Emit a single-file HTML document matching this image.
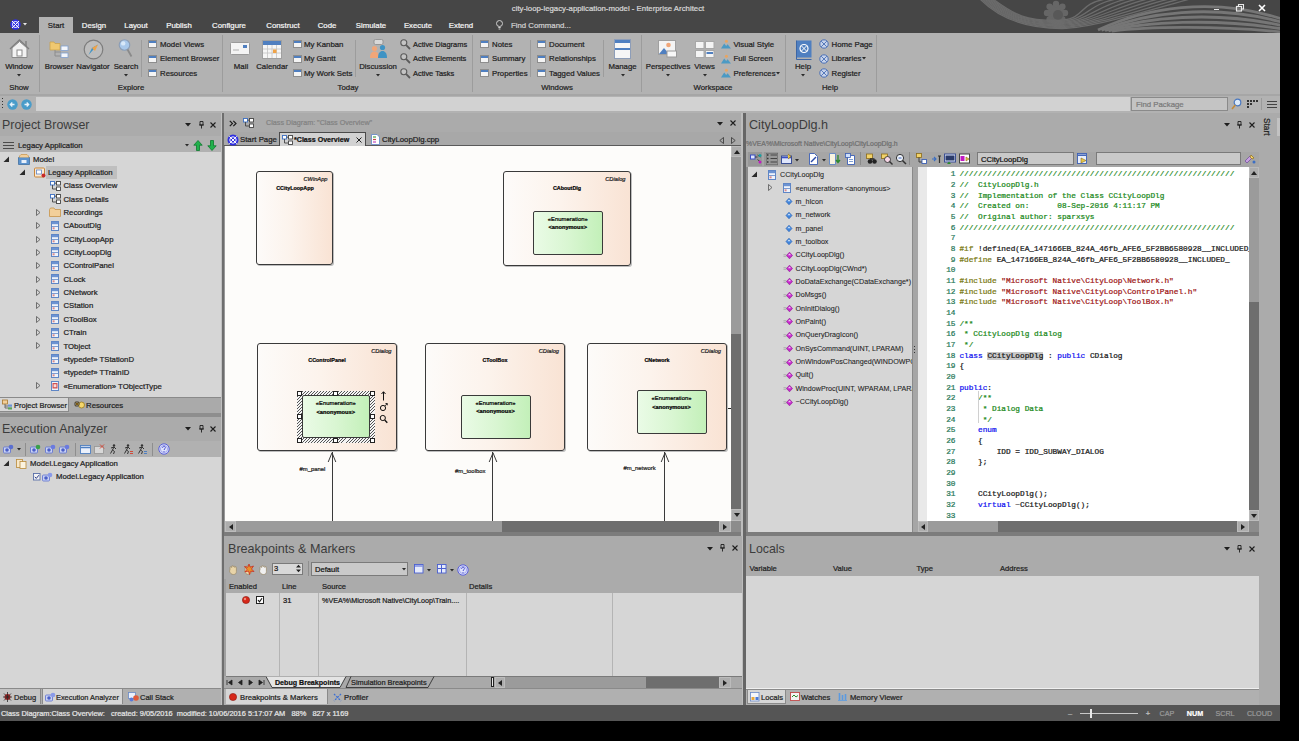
<!DOCTYPE html>
<html><head><meta charset="utf-8">
<style>
*{box-sizing:border-box;margin:0;padding:0}
html,body{width:1310px;height:750px;overflow:hidden;background:#fff;font-family:"Liberation Sans",sans-serif;font-size:7.8px;color:#1e1e1e}
.a{position:absolute}
.t{white-space:nowrap;line-height:12px;height:12px;-webkit-text-stroke:.22px currentColor}
#black{left:0;top:0;width:1299px;height:741px;background:#000}
#app{left:0;top:0;width:1280px;height:721px;background:#ababab;overflow:hidden}
</style></head><body>
<div id="black" class="a"></div>
<div id="app" class="a">
<div class="a" style="left:0px;top:0px;width:1280px;height:33px;background:#464646;"></div>
<svg class="a" style="left:0px;top:0px" width="1280" height="33" viewBox="0 0 1280 33"><g fill="#666"><circle cx="1056" cy="13" r="8.500"/><circle cx="1065.0" cy="13.0" r="3.200"/><circle cx="1062.4" cy="19.4" r="3.200"/><circle cx="1056.0" cy="22.0" r="3.200"/><circle cx="1049.6" cy="19.4" r="3.200"/><circle cx="1047.0" cy="13.0" r="3.200"/><circle cx="1049.6" cy="6.6" r="3.200"/><circle cx="1056.0" cy="4.0" r="3.200"/><circle cx="1062.4" cy="6.6" r="3.200"/></g><circle cx="1058" cy="15" r="5" fill="#585858"/><path d="M993.0 -1 C1015.0 15.4 1026.0 20.5 1056.0 20.5 S1076.0 4.0 1106.0 -1" fill="none" stroke="#6c6c6c" stroke-width="1.3"/><path d="M991.4 -1 C1013.4 16.1 1026.8 21.5 1056.8 21.5 S1086.5 4.4 1116.5 -1" fill="none" stroke="#6c6c6c" stroke-width="1.3"/><path d="M989.8 -1 C1011.8 16.9 1027.5 22.5 1057.5 22.5 S1097.0 4.8 1127.0 -1" fill="none" stroke="#6c6c6c" stroke-width="1.3"/><path d="M988.1 -1 C1010.1 17.6 1028.2 23.5 1058.2 23.5 S1107.5 5.1 1137.5 -1" fill="none" stroke="#6c6c6c" stroke-width="1.3"/><path d="M986.5 -1 C1008.5 18.4 1029.0 24.5 1059.0 24.5 S1118.0 5.5 1148.0 -1" fill="none" stroke="#6c6c6c" stroke-width="1.3"/><path d="M984.9 -1 C1006.9 19.1 1029.8 25.5 1059.8 25.5 S1128.5 5.9 1158.5 -1" fill="none" stroke="#6c6c6c" stroke-width="1.3"/><path d="M983.2 -1 C1005.2 19.9 1030.5 26.5 1060.5 26.5 S1139.0 6.2 1169.0 -1" fill="none" stroke="#6c6c6c" stroke-width="1.3"/><path d="M981.6 -1 C1003.6 20.6 1031.2 27.5 1061.2 27.5 S1149.5 6.6 1179.5 -1" fill="none" stroke="#6c6c6c" stroke-width="1.3"/><path d="M980.0 -1 C1002.0 21.4 1032.0 28.5 1062.0 28.5 S1160.0 7.0 1190.0 -1" fill="none" stroke="#6c6c6c" stroke-width="1.3"/><path d="M1112.0 31.0 C1145 27.0 1212 25.0 1282 32.0" fill="none" stroke="#767676" stroke-width="2.800"/><path d="M1108.5 30.8 C1145 22.2 1212 17.8 1282 28.8" fill="none" stroke="#767676" stroke-width="2.800"/><path d="M1105.0 30.5 C1145 17.5 1212 10.5 1282 25.5" fill="none" stroke="#767676" stroke-width="2.800"/><path d="M1101.5 30.2 C1145 12.8 1212 3.2 1282 22.2" fill="none" stroke="#767676" stroke-width="2.800"/><path d="M1098.0 30.0 C1145 8.0 1212 -4.0 1282 19.0" fill="none" stroke="#767676" stroke-width="2.800"/></svg>
<div class="a t" style="left:608px;top:2.60px;font-size:7.8px;color:#d6d6d6;transform:translateX(-50%);">city-loop-legacy-application-model - Enterprise Architect</div>
<div class="a" style="left:1214px;top:9px;width:5px;height:1px;background:#e8e8e8;"></div>
<svg class="a" style="left:1235px;top:3px" width="10" height="10" viewBox="0 0 10 10"><rect x="1.5" y="3.500" width="5" height="4.500" fill="none" stroke="#e8e8e8" stroke-width="1.2"/><path d="M3.500 3V1.500h5v4.500H7" fill="none" stroke="#e8e8e8" stroke-width="1.100"/></svg>
<svg class="a" style="left:1257px;top:3px" width="10" height="10" viewBox="0 0 10 10"><path d="M2 2l6 6M8 2l-6 6" stroke="#fff" stroke-width="1.6"/></svg>
<svg class="a" style="left:9.5px;top:18.5px" width="11" height="11" viewBox="0 0 11 11"><circle cx="5.500" cy="5.500" r="5.200" fill="#2f2fe0"/><circle cx="5.500" cy="5.500" r="3" fill="none" stroke="#fff" stroke-width="1"/><path d="M2 2l7 7M9 2l-7 7" stroke="#fff" stroke-width="1"/></svg>
<svg class="a" style="left:23px;top:23px" width="5" height="3" viewBox="0 0 5 3"><path d="M0 0h4l-2 2.500z" fill="#e8e8e8"/></svg>
<div class="a" style="left:39px;top:17px;width:34px;height:17px;background:#b2b2b2;"></div>
<div class="a t" style="left:56px;top:19.60px;font-size:7.8px;color:#1e1e1e;transform:translateX(-50%);">Start</div>
<div class="a t" style="left:94px;top:19.60px;font-size:7.8px;color:#f4f4f4;transform:translateX(-50%);">Design</div>
<div class="a t" style="left:136px;top:19.60px;font-size:7.8px;color:#f4f4f4;transform:translateX(-50%);">Layout</div>
<div class="a t" style="left:179px;top:19.60px;font-size:7.8px;color:#f4f4f4;transform:translateX(-50%);">Publish</div>
<div class="a t" style="left:229px;top:19.60px;font-size:7.8px;color:#f4f4f4;transform:translateX(-50%);">Configure</div>
<div class="a t" style="left:283px;top:19.60px;font-size:7.8px;color:#f4f4f4;transform:translateX(-50%);">Construct</div>
<div class="a t" style="left:327px;top:19.60px;font-size:7.8px;color:#f4f4f4;transform:translateX(-50%);">Code</div>
<div class="a t" style="left:371px;top:19.60px;font-size:7.8px;color:#f4f4f4;transform:translateX(-50%);">Simulate</div>
<div class="a t" style="left:418px;top:19.60px;font-size:7.8px;color:#f4f4f4;transform:translateX(-50%);">Execute</div>
<div class="a t" style="left:461px;top:19.60px;font-size:7.8px;color:#f4f4f4;transform:translateX(-50%);">Extend</div>
<svg class="a" style="left:495px;top:19px" width="9" height="12" viewBox="0 0 9 12"><circle cx="4.5" cy="4.5" r="3" fill="none" stroke="#cfcfcf" stroke-width="1"/><path d="M3.3 8.5h2.4M3.6 10h1.8" stroke="#cfcfcf" stroke-width="1"/></svg>
<div class="a t" style="left:511px;top:19.60px;font-size:7.8px;color:#d0d0d0;">Find Command...</div>
<div class="a" style="left:0px;top:33px;width:1280px;height:61px;background:#b2b2b2;"></div>
<div class="a" style="left:0px;top:94px;width:1280px;height:2px;background:#a6a6a6;"></div>
<div class="a" style="left:39px;top:35px;width:1px;height:57px;background:#9c9c9c;"></div>
<div class="a" style="left:222px;top:35px;width:1px;height:57px;background:#9c9c9c;"></div>
<div class="a" style="left:472px;top:35px;width:1px;height:57px;background:#9c9c9c;"></div>
<div class="a" style="left:641px;top:35px;width:1px;height:57px;background:#9c9c9c;"></div>
<div class="a" style="left:785px;top:35px;width:1px;height:57px;background:#9c9c9c;"></div>
<div class="a" style="left:876px;top:35px;width:1px;height:57px;background:#9c9c9c;"></div>
<div class="a" style="left:141px;top:40px;width:1px;height:37px;background:#9c9c9c;"></div>
<div class="a" style="left:355px;top:40px;width:1px;height:37px;background:#9c9c9c;"></div>
<div class="a" style="left:530px;top:40px;width:1px;height:37px;background:#9c9c9c;"></div>
<div class="a" style="left:603px;top:40px;width:1px;height:37px;background:#9c9c9c;"></div>
<svg class="a" style="left:8px;top:38px" width="23" height="21" viewBox="0 0 23 21"><path d="M2 11L11.5 2 21 11" fill="none" stroke="#7e7e7e" stroke-width="1.4"/><path d="M4 10v9.5h15V10L11.5 3.5z" fill="#f2f2f2" stroke="#8a8a8a" stroke-width="1"/><rect x="9" y="12" width="5" height="6" fill="#fff" stroke="#8a8a8a"/><path d="M18 3v5" stroke="#7e7e7e" stroke-width="1.4"/></svg>
<div class="a t" style="left:19px;top:61.00px;font-size:7.8px;color:#1e1e1e;transform:translateX(-50%);">Window</div>
<svg class="a" style="left:17px;top:73.8px" width="4" height="3" viewBox="0 0 4 3"><path d="M0 0h4l-2 2.400z" fill="#2a2a2a"/></svg>
<div class="a t" style="left:19px;top:81.60px;font-size:7.8px;color:#222;transform:translateX(-50%);">Show</div>
<svg class="a" style="left:49px;top:39px" width="21" height="20" viewBox="0 0 21 20"><path d="M1 3h4l1 1.5h5V11H1z" fill="#f0c870" stroke="#c9a24f" stroke-width=".8"/><path d="M6 11v6h6M6 13h6" fill="none" stroke="#8c8c8c" stroke-width="1"/><rect x="12" y="7" width="7" height="4.5" fill="#f3f6fb" stroke="#7fa0d0" stroke-width=".8"/><rect x="12" y="14" width="7" height="4.5" fill="#f3f6fb" stroke="#7fa0d0" stroke-width=".8"/></svg>
<div class="a t" style="left:59px;top:61.00px;font-size:7.8px;color:#1e1e1e;transform:translateX(-50%);">Browser</div>
<svg class="a" style="left:83px;top:39px" width="21" height="21" viewBox="0 0 21 21"><circle cx="10.5" cy="10.5" r="9.3" fill="#bdbdbd" stroke="#7d7d7d" stroke-width="1.2"/><path d="M15 5.5L9 9l-3.5 7z" fill="#3f93c4"/><path d="M15 5.5L12 12l-3-3z" fill="#f0a347"/></svg>
<div class="a t" style="left:93px;top:61.00px;font-size:7.8px;color:#1e1e1e;transform:translateX(-50%);">Navigator</div>
<svg class="a" style="left:118px;top:38px" width="17" height="21" viewBox="0 0 17 21"><circle cx="6.500" cy="7" r="5.300" fill="#a9c8ea" stroke="#8b9db5" stroke-width="1.100"/><circle cx="5.200" cy="5.400" r="2.200" fill="#d8e8f8"/><path d="M9.500 11.500l4 7" stroke="#8a8a8a" stroke-width="1.800"/></svg>
<div class="a t" style="left:126px;top:61.00px;font-size:7.8px;color:#1e1e1e;transform:translateX(-50%);">Search</div>
<svg class="a" style="left:124px;top:73.8px" width="4" height="3" viewBox="0 0 4 3"><path d="M0 0h4l-2 2.400z" fill="#2a2a2a"/></svg>
<svg class="a" style="left:148px;top:40px" width="9" height="8" viewBox="0 0 9 8"><rect x=".5" y=".5" width="8" height="7" fill="#f4f4f4" stroke="#8d8d8d"/><rect x="1" y="1" width="7" height="2" fill="#4f7fc0"/></svg>
<div class="a t" style="left:160px;top:38.60px;font-size:7.8px;color:#1e1e1e;">Model Views</div>
<svg class="a" style="left:148px;top:54.5px" width="9" height="8" viewBox="0 0 9 8"><rect x=".5" y=".5" width="8" height="7" fill="#f4f4f4" stroke="#8d8d8d"/><rect x="1" y="1" width="7" height="2" fill="#4f7fc0"/></svg>
<div class="a t" style="left:160px;top:53.10px;font-size:7.8px;color:#1e1e1e;">Element Browser</div>
<svg class="a" style="left:148px;top:69px" width="9" height="8" viewBox="0 0 9 8"><rect x=".5" y=".5" width="8" height="7" fill="#f4f4f4" stroke="#8d8d8d"/><rect x="1" y="1" width="7" height="2" fill="#4f7fc0"/></svg>
<div class="a t" style="left:160px;top:67.60px;font-size:7.8px;color:#1e1e1e;">Resources</div>
<div class="a t" style="left:131px;top:81.60px;font-size:7.8px;color:#222;transform:translateX(-50%);">Explore</div>
<svg class="a" style="left:230px;top:42px" width="20" height="14" viewBox="0 0 20 14"><rect x=".5" y=".5" width="19" height="12" rx="1" fill="#f4f4f4" stroke="#9a9a9a"/><rect x="13" y="3" width="4" height="3" fill="#4f7fc0"/><path d="M3 8h6" stroke="#b0b0b0"/></svg>
<div class="a t" style="left:241px;top:61.00px;font-size:7.8px;color:#1e1e1e;transform:translateX(-50%);">Mail</div>
<svg class="a" style="left:262px;top:40px" width="20" height="19" viewBox="0 0 20 19"><rect x=".5" y=".5" width="19" height="18" fill="#f6f6f6" stroke="#a0a0a0"/><rect x="1" y="1" width="18" height="4" fill="#4f7fc0"/><path d="M1 9h18M1 13h18M5.5 5v13M10 5v13M14.500 5v13" stroke="#c4c4c4" stroke-width=".8"/><rect x="11" y="9.500" width="3.5" height="3.500" fill="#f0a347"/></svg>
<div class="a t" style="left:272px;top:61.00px;font-size:7.8px;color:#1e1e1e;transform:translateX(-50%);">Calendar</div>
<svg class="a" style="left:293px;top:40px" width="9" height="8" viewBox="0 0 9 8"><rect x=".5" y=".5" width="8" height="7" fill="#f4f4f4" stroke="#8d8d8d"/><rect x="1" y="1" width="7" height="2" fill="#4f7fc0"/></svg>
<div class="a t" style="left:304px;top:38.60px;font-size:7.8px;color:#1e1e1e;">My Kanban</div>
<svg class="a" style="left:293px;top:54.5px" width="9" height="8" viewBox="0 0 9 8"><rect x=".5" y=".5" width="8" height="7" fill="#f4f4f4" stroke="#8d8d8d"/><rect x="1" y="1" width="7" height="2" fill="#4f7fc0"/></svg>
<div class="a t" style="left:304px;top:53.10px;font-size:7.8px;color:#1e1e1e;">My Gantt</div>
<svg class="a" style="left:293px;top:69px" width="9" height="8" viewBox="0 0 9 8"><rect x=".5" y=".5" width="8" height="7" fill="#f4f4f4" stroke="#8d8d8d"/><rect x="1" y="1" width="7" height="2" fill="#4f7fc0"/></svg>
<div class="a t" style="left:304px;top:67.60px;font-size:7.8px;color:#1e1e1e;">My Work Sets</div>
<svg class="a" style="left:369px;top:39px" width="19" height="20" viewBox="0 0 19 20"><rect x="5" y=".5" width="9" height="5" rx="1.5" fill="#d8d8d8" stroke="#8a8a8a" stroke-width=".8"/><circle cx="5.500" cy="9.500" r="2.600" fill="#f0a679"/><path d="M1 19c0-5 2-6.500 4.500-6.500S10 14 10 19z" fill="#f0a679"/><circle cx="13.5" cy="8.500" r="2.600" fill="#3f93c4"/><path d="M9 19c0-5 2-7 4.500-7S18 14 18 19z" fill="#3f93c4"/></svg>
<div class="a t" style="left:378px;top:61.00px;font-size:7.8px;color:#1e1e1e;transform:translateX(-50%);">Discussion</div>
<svg class="a" style="left:376px;top:73.8px" width="4" height="3" viewBox="0 0 4 3"><path d="M0 0h4l-2 2.400z" fill="#2a2a2a"/></svg>
<svg class="a" style="left:400px;top:38.5px" width="11" height="11" viewBox="0 0 11 11"><circle cx="3.800" cy="3.800" r="3" fill="#c4c4c4" stroke="#5a5a5a" stroke-width="1.100"/><path d="M6.200 6.200l3.800 3.800" stroke="#5a5a5a" stroke-width="1.800"/></svg>
<div class="a t" style="left:413px;top:38.60px;font-size:7.45px;color:#1e1e1e;">Active Diagrams</div>
<svg class="a" style="left:400px;top:53.0px" width="11" height="11" viewBox="0 0 11 11"><circle cx="3.800" cy="3.800" r="3" fill="#c4c4c4" stroke="#5a5a5a" stroke-width="1.100"/><path d="M6.200 6.200l3.800 3.800" stroke="#5a5a5a" stroke-width="1.800"/></svg>
<div class="a t" style="left:413px;top:53.10px;font-size:7.45px;color:#1e1e1e;">Active Elements</div>
<svg class="a" style="left:400px;top:67.5px" width="11" height="11" viewBox="0 0 11 11"><circle cx="3.800" cy="3.800" r="3" fill="#c4c4c4" stroke="#5a5a5a" stroke-width="1.100"/><path d="M6.200 6.200l3.800 3.800" stroke="#5a5a5a" stroke-width="1.800"/></svg>
<div class="a t" style="left:413px;top:67.60px;font-size:7.45px;color:#1e1e1e;">Active Tasks</div>
<div class="a t" style="left:348px;top:81.60px;font-size:7.8px;color:#222;transform:translateX(-50%);">Today</div>
<svg class="a" style="left:480px;top:40px" width="9" height="8" viewBox="0 0 9 8"><rect x=".5" y=".5" width="8" height="7" fill="#f4f4f4" stroke="#8d8d8d"/><rect x="1" y="1" width="7" height="2" fill="#4f7fc0"/></svg>
<div class="a t" style="left:492px;top:38.60px;font-size:7.8px;color:#1e1e1e;">Notes</div>
<svg class="a" style="left:480px;top:54.5px" width="9" height="8" viewBox="0 0 9 8"><rect x=".5" y=".5" width="8" height="7" fill="#f4f4f4" stroke="#8d8d8d"/><rect x="1" y="1" width="7" height="2" fill="#4f7fc0"/></svg>
<div class="a t" style="left:492px;top:53.10px;font-size:7.8px;color:#1e1e1e;">Summary</div>
<svg class="a" style="left:480px;top:69px" width="9" height="8" viewBox="0 0 9 8"><rect x=".5" y=".5" width="8" height="7" fill="#f4f4f4" stroke="#8d8d8d"/><rect x="1" y="1" width="7" height="2" fill="#4f7fc0"/></svg>
<div class="a t" style="left:492px;top:67.60px;font-size:7.8px;color:#1e1e1e;">Properties</div>
<svg class="a" style="left:537px;top:40px" width="9" height="8" viewBox="0 0 9 8"><rect x=".5" y=".5" width="8" height="7" fill="#f4f4f4" stroke="#8d8d8d"/><rect x="1" y="1" width="7" height="2" fill="#4f7fc0"/></svg>
<div class="a t" style="left:549px;top:38.60px;font-size:7.8px;color:#1e1e1e;">Document</div>
<svg class="a" style="left:537px;top:54.5px" width="9" height="8" viewBox="0 0 9 8"><rect x=".5" y=".5" width="8" height="7" fill="#f4f4f4" stroke="#8d8d8d"/><rect x="1" y="1" width="7" height="2" fill="#4f7fc0"/></svg>
<div class="a t" style="left:549px;top:53.10px;font-size:7.8px;color:#1e1e1e;">Relationships</div>
<svg class="a" style="left:537px;top:69px" width="9" height="8" viewBox="0 0 9 8"><rect x=".5" y=".5" width="8" height="7" fill="#f4f4f4" stroke="#8d8d8d"/><rect x="1" y="1" width="7" height="2" fill="#4f7fc0"/></svg>
<div class="a t" style="left:549px;top:67.60px;font-size:7.8px;color:#1e1e1e;">Tagged Values</div>
<svg class="a" style="left:614px;top:39px" width="17" height="20" viewBox="0 0 17 20"><rect x=".5" y=".5" width="16" height="19" fill="#f6f6f6" stroke="#8d9db8"/><rect x="1" y="1" width="15" height="3" fill="#4f7fc0"/><rect x="1" y="9" width="15" height="2" fill="#4f7fc0"/></svg>
<div class="a t" style="left:622.5px;top:61.00px;font-size:7.8px;color:#1e1e1e;transform:translateX(-50%);">Manage</div>
<svg class="a" style="left:620.5px;top:73.8px" width="4" height="3" viewBox="0 0 4 3"><path d="M0 0h4l-2 2.400z" fill="#2a2a2a"/></svg>
<div class="a t" style="left:557px;top:81.60px;font-size:7.8px;color:#222;transform:translateX(-50%);">Windows</div>
<svg class="a" style="left:658px;top:40px" width="19" height="19" viewBox="0 0 19 19"><rect x=".5" y=".5" width="17" height="14" fill="#f4f4f4" stroke="#a0a0a0"/><circle cx="10.5" cy="5" r="2.300" fill="#f0a679"/><path d="M1 14l5-6 5 6z" fill="#4f7fc0"/><rect x="9" y="11" width="9.500" height="6" fill="#f8f8f8" stroke="#9a9a9a"/></svg>
<div class="a t" style="left:668px;top:61.00px;font-size:7.8px;color:#1e1e1e;transform:translateX(-50%);">Perspectives</div>
<svg class="a" style="left:666px;top:73.8px" width="4" height="3" viewBox="0 0 4 3"><path d="M0 0h4l-2 2.400z" fill="#2a2a2a"/></svg>
<svg class="a" style="left:695px;top:41px" width="20" height="17" viewBox="0 0 20 17"><rect x=".5" y=".5" width="8.500" height="7" fill="#f4f4f4" stroke="#a8a8a8"/><rect x="10.5" y=".5" width="8.500" height="7" fill="#f4f4f4" stroke="#a8a8a8"/><rect x=".5" y="9.500" width="8.500" height="7" fill="#f4f4f4" stroke="#a8a8a8"/><rect x="10.5" y="9.500" width="8.500" height="7" fill="#f4f4f4" stroke="#a8a8a8"/><rect x="11.5" y="11" width="6.500" height="2" fill="#4f7fc0"/></svg>
<div class="a t" style="left:704.5px;top:61.00px;font-size:7.8px;color:#1e1e1e;transform:translateX(-50%);">Views</div>
<svg class="a" style="left:702.5px;top:73.8px" width="4" height="3" viewBox="0 0 4 3"><path d="M0 0h4l-2 2.400z" fill="#2a2a2a"/></svg>
<svg class="a" style="left:721px;top:39px" width="10" height="10" viewBox="0 0 10 10"><path d="M0 9.5l3.2-5 2 2.6 1.4-1.8 3.4 4.2z" fill="#4b9ac4"/><circle cx="5.4" cy="2.2" r="1.5" fill="#e9a45f"/></svg>
<div class="a t" style="left:733.5px;top:38.60px;font-size:7.8px;color:#1e1e1e;">Visual Style</div>
<svg class="a" style="left:721px;top:53.5px" width="10" height="10" viewBox="0 0 10 10"><path d="M0 9.5l3.2-5 2 2.6 1.4-1.8 3.4 4.2z" fill="#4b9ac4"/><circle cx="5.4" cy="2.2" r="1.5" fill="#e9a45f"/></svg>
<div class="a t" style="left:733.5px;top:53.10px;font-size:7.8px;color:#1e1e1e;">Full Screen</div>
<svg class="a" style="left:721px;top:68px" width="10" height="10" viewBox="0 0 10 10"><path d="M0 9.5l3.2-5 2 2.6 1.4-1.8 3.4 4.2z" fill="#4b9ac4"/><circle cx="5.4" cy="2.2" r="1.5" fill="#e9a45f"/></svg>
<div class="a t" style="left:733.5px;top:67.60px;font-size:7.8px;color:#1e1e1e;">Preferences</div>
<svg class="a" style="left:776px;top:72.3px" width="4" height="3" viewBox="0 0 4 3"><path d="M0 0h4l-2 2.400z" fill="#2a2a2a"/></svg>
<div class="a t" style="left:713px;top:81.60px;font-size:7.8px;color:#222;transform:translateX(-50%);">Workspace</div>
<svg class="a" style="left:795px;top:40px" width="17" height="20" viewBox="0 0 17 20"><rect x="1.5" y=".5" width="15" height="17" fill="#4f7fc0"/><path d="M1.5 .5v19h15" fill="none" stroke="#3d66a5" stroke-width="1"/><circle cx="9" cy="8.500" r="4" fill="none" stroke="#fff" stroke-width="1.200"/><path d="M6.200 5.700l5.600 5.600M11.800 5.700l-5.600 5.600" stroke="#fff" stroke-width="1"/></svg>
<div class="a t" style="left:803px;top:61.00px;font-size:7.8px;color:#1e1e1e;transform:translateX(-50%);">Help</div>
<svg class="a" style="left:801px;top:73.8px" width="4" height="3" viewBox="0 0 4 3"><path d="M0 0h4l-2 2.400z" fill="#2a2a2a"/></svg>
<svg class="a" style="left:819px;top:39px" width="10" height="10" viewBox="0 0 10 10"><circle cx="5" cy="5" r="4.2" fill="#c7d3ea" stroke="#4a6fb5" stroke-width="1"/><path d="M2.2 2.2l5.6 5.6M7.8 2.2l-5.6 5.6" stroke="#4a6fb5" stroke-width=".9"/></svg>
<div class="a t" style="left:831.5px;top:38.60px;font-size:7.8px;color:#1e1e1e;">Home Page</div>
<svg class="a" style="left:819px;top:53.5px" width="10" height="10" viewBox="0 0 10 10"><circle cx="5" cy="5" r="4.2" fill="#c7d3ea" stroke="#4a6fb5" stroke-width="1"/><path d="M2.2 2.2l5.6 5.6M7.8 2.2l-5.6 5.6" stroke="#4a6fb5" stroke-width=".9"/></svg>
<div class="a t" style="left:831.5px;top:53.10px;font-size:7.8px;color:#1e1e1e;">Libraries</div>
<svg class="a" style="left:819px;top:68px" width="10" height="10" viewBox="0 0 10 10"><circle cx="5" cy="5" r="4.2" fill="#c7d3ea" stroke="#4a6fb5" stroke-width="1"/><path d="M2.2 2.2l5.6 5.6M7.8 2.2l-5.6 5.6" stroke="#4a6fb5" stroke-width=".9"/></svg>
<div class="a t" style="left:831.5px;top:67.60px;font-size:7.8px;color:#1e1e1e;">Register</div>
<svg class="a" style="left:862px;top:57.3px" width="4" height="3" viewBox="0 0 4 3"><path d="M0 0h4l-2 2.400z" fill="#2a2a2a"/></svg>
<div class="a t" style="left:830px;top:81.60px;font-size:7.8px;color:#222;transform:translateX(-50%);">Help</div>
<div class="a" style="left:0px;top:96px;width:1280px;height:17px;background:#b2b2b2;"></div>
<div class="a" style="left:36px;top:97px;width:1094px;height:14px;background:#d2d2d2;"></div>
<div class="a" style="left:2px;top:98px;width:1px;height:1px;background:#333;"></div>
<div class="a" style="left:2px;top:101px;width:1px;height:1px;background:#333;"></div>
<div class="a" style="left:2px;top:104px;width:1px;height:1px;background:#333;"></div>
<div class="a" style="left:2px;top:107px;width:1px;height:1px;background:#333;"></div>
<svg class="a" style="left:7px;top:98.5px" width="11" height="11" viewBox="0 0 11 11"><circle cx="5.500" cy="5.500" r="5.200" fill="#4a9cc9"/><path d="M7.500 5.500H3.500M5.300 3.500L3.300 5.500l2 2" fill="none" stroke="#e8f2fa" stroke-width="1.300"/></svg>
<svg class="a" style="left:21px;top:98.5px" width="11" height="11" viewBox="0 0 11 11"><circle cx="5.500" cy="5.500" r="5.200" fill="#4a9cc9"/><path d="M3.500 5.500h4M5.700 3.500l2 2-2 2" fill="none" stroke="#e8f2fa" stroke-width="1.300"/></svg>
<div class="a" style="left:1131px;top:97px;width:97px;height:14px;background:#c4c4c4;border:1px solid #8a8a8a"></div>
<div class="a t" style="left:1136px;top:98.60px;font-size:7.8px;color:#7a7a7a;">Find Package</div>
<svg class="a" style="left:1231px;top:98px" width="11" height="12" viewBox="0 0 11 12"><circle cx="6.500" cy="4.500" r="3.300" fill="#dbe9f8" stroke="#4a78c0" stroke-width="1.200"/><path d="M4.300 7L1 11" stroke="#c28a3a" stroke-width="1.600"/></svg>
<svg class="a" style="left:1246.5px;top:99px" width="12" height="10" viewBox="0 0 12 10"><path d="M0 1h2v2H0zM3 1h2v2H3zM6 1h2v2H6zM9 1h2v2H9zM0 4h2v2H0zM3 4h2v2H3zM0 7h2v2H0z" fill="#333"/></svg>
<div class="a" style="left:1261px;top:98px;width:1px;height:12px;background:#9a9a9a;"></div>
<div class="a" style="left:1266.5px;top:101px;width:10.5px;height:1px;background:#444;"></div>
<div class="a" style="left:1266.5px;top:104px;width:10.5px;height:1px;background:#444;"></div>
<div class="a" style="left:1266.5px;top:107px;width:10.5px;height:1px;background:#444;"></div>
<div class="a" style="left:0px;top:113px;width:221px;height:39px;background:#ababab;"></div>
<div class="a" style="left:221px;top:113px;width:1px;height:592px;background:#c0c0c0;"></div>
<div class="a" style="left:222px;top:113px;width:2px;height:592px;background:#6e6e6e;"></div>
<div class="a t" style="left:2px;top:119.10px;font-size:12.4px;color:#3c3c3c;line-height:16px;height:16px;margin-top:-2px;-webkit-text-stroke:0;">Project Browser</div>
<svg class="a" style="left:185px;top:123.0px" width="6" height="4" viewBox="0 0 6 4"><path d="M0 0h6l-3 3.500z" fill="#1e1e1e"/></svg>
<svg class="a" style="left:198.5px;top:120.5px" width="5" height="8" viewBox="0 0 5 8"><path d="M1 .5h3v3.500H1zM0 4h5M2.500 4v3.500" fill="none" stroke="#1e1e1e" stroke-width=".9"/></svg>
<svg class="a" style="left:210px;top:121.5px" width="6" height="6" viewBox="0 0 6 6"><path d="M.5 .5l5 5M5.500 .5l-5 5" stroke="#1e1e1e" stroke-width="1.100"/></svg>
<div class="a" style="left:0px;top:136px;width:221px;height:16px;background:#b1b1b1;"></div>
<div class="a" style="left:3px;top:142px;width:11px;height:1px;background:#4a4a4a;"></div>
<div class="a" style="left:3px;top:145px;width:11px;height:1px;background:#4a4a4a;"></div>
<div class="a" style="left:3px;top:148px;width:11px;height:1px;background:#4a4a4a;"></div>
<div class="a t" style="left:18px;top:139.60px;font-size:7.75px;color:#1e1e1e;">Legacy Application</div>
<svg class="a" style="left:185px;top:144.3px" width="4" height="3" viewBox="0 0 4 3"><path d="M0 0h4l-2 2.400z" fill="#2a2a2a"/></svg>
<svg class="a" style="left:193px;top:140px" width="10" height="11" viewBox="0 0 10 11"><path d="M5 .5L.8 5.200h2.700V10.500h3V5.200h2.700z" fill="#22b14c" stroke="#0e7a2d" stroke-width=".8"/></svg>
<svg class="a" style="left:207px;top:140px" width="10" height="11" viewBox="0 0 10 11"><path d="M5 10.500L.8 5.800h2.700V.5h3V5.800h2.700z" fill="#22b14c" stroke="#0e7a2d" stroke-width=".8"/></svg>
<div class="a" style="left:0px;top:152px;width:221px;height:245px;background:#d6d6d6;"></div>
<div class="a" style="left:46px;top:166px;width:71px;height:13px;background:#bfbfbf;"></div>
<svg class="a" style="left:3px;top:155.5px" width="7" height="7" viewBox="0 0 7 7"><path d="M6 .5v5.500H.5z" fill="#2a2a2a"/></svg>
<svg class="a" style="left:18px;top:153.5px" width="12" height="11" viewBox="0 0 12 11"><path d="M.5 3.500V10.500h11V3.500z" fill="#5b93cf" stroke="#41709f" stroke-width=".8"/><path d="M1.500 3.500V2l1.500-1.500h6L10.500 2v1.500" fill="#f2cf9a" stroke="#c99a55" stroke-width=".8"/><rect x="3.500" y="6" width="5" height="3" fill="#e8f0fa"/></svg>
<div class="a t" style="left:33px;top:153.60px;font-size:7.75px;color:#1e1e1e;">Model</div>
<svg class="a" style="left:19px;top:168.85px" width="7" height="7" viewBox="0 0 7 7"><path d="M6 .5v5.500H.5z" fill="#2a2a2a"/></svg>
<svg class="a" style="left:34px;top:166.85px" width="12" height="11" viewBox="0 0 12 11"><rect x=".5" y="1" width="10" height="9" rx="1" fill="#fbe9d2" stroke="#c8863a" stroke-width="1"/><rect x="2.500" y="3" width="5" height="4" fill="#fff" stroke="#5f86c6" stroke-width=".8"/><circle cx="9.500" cy="8.500" r="2" fill="#c62828"/></svg>
<div class="a t" style="left:48px;top:166.95px;font-size:7.75px;color:#1e1e1e;">Legacy Application</div>
<svg class="a" style="left:50px;top:180.7px" width="11" height="10" viewBox="0 0 11 10"><rect x=".5" y=".5" width="4" height="3.500" fill="#fff" stroke="#3b6fc4" stroke-width=".9"/><rect x="6.500" y=".5" width="4" height="3.500" fill="#fff" stroke="#444" stroke-width=".9"/><rect x="6.500" y="6" width="4" height="3.500" fill="#fff" stroke="#444" stroke-width=".9"/><path d="M2.500 4v4h4M4.500 2.200h2" fill="none" stroke="#444" stroke-width=".9"/></svg>
<div class="a t" style="left:63.5px;top:180.30px;font-size:7.75px;color:#1e1e1e;">Class Overview</div>
<svg class="a" style="left:50px;top:194.05px" width="11" height="10" viewBox="0 0 11 10"><rect x=".5" y=".5" width="4" height="3.500" fill="#fff" stroke="#3b6fc4" stroke-width=".9"/><rect x="6.500" y=".5" width="4" height="3.500" fill="#fff" stroke="#444" stroke-width=".9"/><rect x="6.500" y="6" width="4" height="3.500" fill="#fff" stroke="#444" stroke-width=".9"/><path d="M2.500 4v4h4M4.500 2.200h2" fill="none" stroke="#444" stroke-width=".9"/></svg>
<div class="a t" style="left:63.5px;top:193.65px;font-size:7.75px;color:#1e1e1e;">Class Details</div>
<svg class="a" style="left:35.5px;top:208.9px" width="5" height="7" viewBox="0 0 5 7"><path d="M.5 .5v6l3.500-3z" fill="none" stroke="#555" stroke-width=".8"/></svg>
<svg class="a" style="left:49px;top:207.4px" width="12" height="10" viewBox="0 0 12 10"><path d="M.5 2.500V9.500h11V2.500H6L5 1H1.500z" fill="#f2cf9a" stroke="#c99a55" stroke-width=".9"/></svg>
<div class="a t" style="left:63.5px;top:207.00px;font-size:7.75px;color:#1e1e1e;">Recordings</div>
<svg class="a" style="left:35.5px;top:222.25px" width="5" height="7" viewBox="0 0 5 7"><path d="M.5 .5v6l3.500-3z" fill="none" stroke="#555" stroke-width=".8"/></svg>
<svg class="a" style="left:51px;top:220.75px" width="8" height="10" viewBox="0 0 8 10"><rect x=".5" y=".5" width="7" height="9" fill="#eef3fb" stroke="#5f86c6"/><rect x="1" y="1" width="6" height="2.200" fill="#6c93d2"/><path d="M1 5.500h6" stroke="#5f86c6" stroke-width=".8"/><rect x="1.600" y="6.300" width="2" height="2" fill="#d98a8a"/></svg>
<div class="a t" style="left:63.5px;top:220.35px;font-size:7.75px;color:#1e1e1e;">CAboutDlg</div>
<svg class="a" style="left:35.5px;top:235.6px" width="5" height="7" viewBox="0 0 5 7"><path d="M.5 .5v6l3.500-3z" fill="none" stroke="#555" stroke-width=".8"/></svg>
<svg class="a" style="left:51px;top:234.1px" width="8" height="10" viewBox="0 0 8 10"><rect x=".5" y=".5" width="7" height="9" fill="#eef3fb" stroke="#5f86c6"/><rect x="1" y="1" width="6" height="2.200" fill="#6c93d2"/><path d="M1 5.500h6" stroke="#5f86c6" stroke-width=".8"/><rect x="1.600" y="6.300" width="2" height="2" fill="#d98a8a"/></svg>
<div class="a t" style="left:63.5px;top:233.70px;font-size:7.75px;color:#1e1e1e;">CCityLoopApp</div>
<svg class="a" style="left:35.5px;top:248.95px" width="5" height="7" viewBox="0 0 5 7"><path d="M.5 .5v6l3.500-3z" fill="none" stroke="#555" stroke-width=".8"/></svg>
<svg class="a" style="left:51px;top:247.45px" width="8" height="10" viewBox="0 0 8 10"><rect x=".5" y=".5" width="7" height="9" fill="#eef3fb" stroke="#5f86c6"/><rect x="1" y="1" width="6" height="2.200" fill="#6c93d2"/><path d="M1 5.500h6" stroke="#5f86c6" stroke-width=".8"/><rect x="1.600" y="6.300" width="2" height="2" fill="#d98a8a"/></svg>
<div class="a t" style="left:63.5px;top:247.05px;font-size:7.75px;color:#1e1e1e;">CCityLoopDlg</div>
<svg class="a" style="left:35.5px;top:262.3px" width="5" height="7" viewBox="0 0 5 7"><path d="M.5 .5v6l3.500-3z" fill="none" stroke="#555" stroke-width=".8"/></svg>
<svg class="a" style="left:51px;top:260.8px" width="8" height="10" viewBox="0 0 8 10"><rect x=".5" y=".5" width="7" height="9" fill="#eef3fb" stroke="#5f86c6"/><rect x="1" y="1" width="6" height="2.200" fill="#6c93d2"/><path d="M1 5.500h6" stroke="#5f86c6" stroke-width=".8"/><rect x="1.600" y="6.300" width="2" height="2" fill="#d98a8a"/></svg>
<div class="a t" style="left:63.5px;top:260.40px;font-size:7.75px;color:#1e1e1e;">CControlPanel</div>
<svg class="a" style="left:35.5px;top:275.65px" width="5" height="7" viewBox="0 0 5 7"><path d="M.5 .5v6l3.500-3z" fill="none" stroke="#555" stroke-width=".8"/></svg>
<svg class="a" style="left:51px;top:274.15px" width="8" height="10" viewBox="0 0 8 10"><rect x=".5" y=".5" width="7" height="9" fill="#eef3fb" stroke="#5f86c6"/><rect x="1" y="1" width="6" height="2.200" fill="#6c93d2"/><path d="M1 5.500h6" stroke="#5f86c6" stroke-width=".8"/><rect x="1.600" y="6.300" width="2" height="2" fill="#d98a8a"/></svg>
<div class="a t" style="left:63.5px;top:273.75px;font-size:7.75px;color:#1e1e1e;">CLock</div>
<svg class="a" style="left:35.5px;top:289.0px" width="5" height="7" viewBox="0 0 5 7"><path d="M.5 .5v6l3.500-3z" fill="none" stroke="#555" stroke-width=".8"/></svg>
<svg class="a" style="left:51px;top:287.5px" width="8" height="10" viewBox="0 0 8 10"><rect x=".5" y=".5" width="7" height="9" fill="#eef3fb" stroke="#5f86c6"/><rect x="1" y="1" width="6" height="2.200" fill="#6c93d2"/><path d="M1 5.500h6" stroke="#5f86c6" stroke-width=".8"/><rect x="1.600" y="6.300" width="2" height="2" fill="#d98a8a"/></svg>
<div class="a t" style="left:63.5px;top:287.10px;font-size:7.75px;color:#1e1e1e;">CNetwork</div>
<svg class="a" style="left:35.5px;top:302.35px" width="5" height="7" viewBox="0 0 5 7"><path d="M.5 .5v6l3.500-3z" fill="none" stroke="#555" stroke-width=".8"/></svg>
<svg class="a" style="left:51px;top:300.85px" width="8" height="10" viewBox="0 0 8 10"><rect x=".5" y=".5" width="7" height="9" fill="#eef3fb" stroke="#5f86c6"/><rect x="1" y="1" width="6" height="2.200" fill="#6c93d2"/><path d="M1 5.500h6" stroke="#5f86c6" stroke-width=".8"/><rect x="1.600" y="6.300" width="2" height="2" fill="#d98a8a"/></svg>
<div class="a t" style="left:63.5px;top:300.45px;font-size:7.75px;color:#1e1e1e;">CStation</div>
<svg class="a" style="left:35.5px;top:315.7px" width="5" height="7" viewBox="0 0 5 7"><path d="M.5 .5v6l3.500-3z" fill="none" stroke="#555" stroke-width=".8"/></svg>
<svg class="a" style="left:51px;top:314.2px" width="8" height="10" viewBox="0 0 8 10"><rect x=".5" y=".5" width="7" height="9" fill="#eef3fb" stroke="#5f86c6"/><rect x="1" y="1" width="6" height="2.200" fill="#6c93d2"/><path d="M1 5.500h6" stroke="#5f86c6" stroke-width=".8"/><rect x="1.600" y="6.300" width="2" height="2" fill="#d98a8a"/></svg>
<div class="a t" style="left:63.5px;top:313.80px;font-size:7.75px;color:#1e1e1e;">CToolBox</div>
<svg class="a" style="left:35.5px;top:329.04999999999995px" width="5" height="7" viewBox="0 0 5 7"><path d="M.5 .5v6l3.500-3z" fill="none" stroke="#555" stroke-width=".8"/></svg>
<svg class="a" style="left:51px;top:327.54999999999995px" width="8" height="10" viewBox="0 0 8 10"><rect x=".5" y=".5" width="7" height="9" fill="#eef3fb" stroke="#5f86c6"/><rect x="1" y="1" width="6" height="2.200" fill="#6c93d2"/><path d="M1 5.500h6" stroke="#5f86c6" stroke-width=".8"/><rect x="1.600" y="6.300" width="2" height="2" fill="#d98a8a"/></svg>
<div class="a t" style="left:63.5px;top:327.15px;font-size:7.75px;color:#1e1e1e;">CTrain</div>
<svg class="a" style="left:35.5px;top:342.4px" width="5" height="7" viewBox="0 0 5 7"><path d="M.5 .5v6l3.500-3z" fill="none" stroke="#555" stroke-width=".8"/></svg>
<svg class="a" style="left:51px;top:340.9px" width="8" height="10" viewBox="0 0 8 10"><rect x=".5" y=".5" width="7" height="9" fill="#eef3fb" stroke="#5f86c6"/><rect x="1" y="1" width="6" height="2.200" fill="#6c93d2"/><path d="M1 5.500h6" stroke="#5f86c6" stroke-width=".8"/><rect x="1.600" y="6.300" width="2" height="2" fill="#d98a8a"/></svg>
<div class="a t" style="left:63.5px;top:340.50px;font-size:7.75px;color:#1e1e1e;">TObject</div>
<svg class="a" style="left:51px;top:354.25px" width="8" height="10" viewBox="0 0 8 10"><rect x=".5" y=".5" width="7" height="9" fill="#eef3fb" stroke="#5f86c6"/><rect x="1" y="1" width="6" height="2.200" fill="#6c93d2"/><path d="M1 5.500h6" stroke="#5f86c6" stroke-width=".8"/><rect x="1.600" y="6.300" width="2" height="2" fill="#d98a8a"/></svg>
<div class="a t" style="left:63.5px;top:353.85px;font-size:7.75px;color:#1e1e1e;">«typedef» TStationD</div>
<svg class="a" style="left:51px;top:367.6px" width="8" height="10" viewBox="0 0 8 10"><rect x=".5" y=".5" width="7" height="9" fill="#eef3fb" stroke="#5f86c6"/><rect x="1" y="1" width="6" height="2.200" fill="#6c93d2"/><path d="M1 5.500h6" stroke="#5f86c6" stroke-width=".8"/><rect x="1.600" y="6.300" width="2" height="2" fill="#d98a8a"/></svg>
<div class="a t" style="left:63.5px;top:367.20px;font-size:7.75px;color:#1e1e1e;">«typedef» TTrainID</div>
<svg class="a" style="left:35.5px;top:382.45px" width="5" height="7" viewBox="0 0 5 7"><path d="M.5 .5v6l3.500-3z" fill="none" stroke="#555" stroke-width=".8"/></svg>
<svg class="a" style="left:51px;top:380.95px" width="8" height="10" viewBox="0 0 8 10"><rect x=".5" y=".5" width="7" height="9" fill="#eef3fb" stroke="#5f86c6"/><rect x="1.500" y="2" width="5" height="5.500" fill="#d05050"/><rect x="2.600" y="3.200" width="2.800" height="3" fill="#f6dada"/></svg>
<div class="a t" style="left:63.5px;top:380.55px;font-size:7.75px;color:#1e1e1e;">«Enumeration» TObjectType</div>
<div class="a" style="left:0px;top:397px;width:221px;height:16px;background:#aaaaaa;"></div>
<div class="a" style="left:0px;top:397px;width:221px;height:1px;background:#8a8a8a;"></div>
<div class="a" style="left:0px;top:398px;width:69px;height:14px;background:#d6d6d6;border-right:1px solid #8a8a8a;border-bottom:1px solid #8a8a8a"></div>
<svg class="a" style="left:2px;top:399px" width="11" height="11" viewBox="0 0 11 11"><rect x=".5" y="1" width="5" height="4" fill="#f2cf9a" stroke="#a9782f" stroke-width=".8"/><path d="M3 5v4h3M3 7h3" fill="none" stroke="#555" stroke-width=".8"/><rect x="6" y="5.500" width="4" height="2.200" fill="#6c93d2"/><rect x="6" y="8.300" width="4" height="2.200" fill="#5aa35a"/></svg>
<div class="a t" style="left:14px;top:399.60px;font-size:7.5px;color:#1e1e1e;">Project Browser</div>
<svg class="a" style="left:74px;top:399px" width="12" height="11" viewBox="0 0 12 11"><path d="M1 3l4 4M5 3L1 7" stroke="#7a5a14" stroke-width="1.200"/><circle cx="7.500" cy="6" r="3" fill="#f4d66a" stroke="#9a7a1a" stroke-width=".8"/><circle cx="3" cy="5" r="2.300" fill="none" stroke="#4a4a4a" stroke-width=".9"/></svg>
<div class="a t" style="left:86px;top:399.60px;font-size:7.8px;color:#1e1e1e;">Resources</div>
<div class="a" style="left:0px;top:413px;width:221px;height:4px;background:#8e8e8e;"></div>
<div class="a" style="left:0px;top:417px;width:221px;height:40px;background:#ababab;"></div>
<div class="a t" style="left:2px;top:422.80px;font-size:12.4px;color:#3c3c3c;line-height:16px;height:16px;margin-top:-2px;-webkit-text-stroke:0;">Execution Analyzer</div>
<svg class="a" style="left:185px;top:427.0px" width="6" height="4" viewBox="0 0 6 4"><path d="M0 0h6l-3 3.500z" fill="#1e1e1e"/></svg>
<svg class="a" style="left:198.5px;top:424.5px" width="5" height="8" viewBox="0 0 5 8"><path d="M1 .5h3v3.500H1zM0 4h5M2.500 4v3.500" fill="none" stroke="#1e1e1e" stroke-width=".9"/></svg>
<svg class="a" style="left:210px;top:425.5px" width="6" height="6" viewBox="0 0 6 6"><path d="M.5 .5l5 5M5.500 .5l-5 5" stroke="#1e1e1e" stroke-width="1.100"/></svg>
<div class="a" style="left:0px;top:441px;width:221px;height:16px;background:#b1b1b1;"></div>
<svg class="a" style="left:3px;top:444px" width="11" height="10" viewBox="0 0 11 10"><rect x=".5" y="3" width="7" height="6" rx="1" fill="#c9d2f2" stroke="#5a6fd0" stroke-width=".8"/><circle cx="4" cy="6" r="1.800" fill="#4a5fc8"/><circle cx="8" cy="3" r="2.300" fill="#5a6fd0"/></svg>
<svg class="a" style="left:17px;top:448.3px" width="4" height="3" viewBox="0 0 4 3"><path d="M0 0h4l-2 2.400z" fill="#2a2a2a"/></svg>
<div class="a" style="left:25px;top:443px;width:1px;height:13px;background:#8e8e8e;"></div>
<svg class="a" style="left:30px;top:444px" width="11" height="10" viewBox="0 0 11 10"><rect x=".5" y="3" width="7" height="6" rx="1" fill="#c9d2f2" stroke="#5a6fd0" stroke-width=".8"/><circle cx="4" cy="6" r="1.800" fill="#4a5fc8"/><circle cx="8" cy="3" r="2.300" fill="#3aa04a"/></svg>
<svg class="a" style="left:45px;top:444px" width="11" height="10" viewBox="0 0 11 10"><rect x=".5" y="3" width="7" height="6" rx="1" fill="#c9d2f2" stroke="#5a6fd0" stroke-width=".8"/><circle cx="4" cy="6" r="1.800" fill="#4a5fc8"/><circle cx="8" cy="3" r="2.300" fill="#6a7adf"/></svg>
<svg class="a" style="left:59px;top:444px" width="11" height="10" viewBox="0 0 11 10"><rect x=".5" y="3" width="7" height="6" rx="1" fill="#c9d2f2" stroke="#5a6fd0" stroke-width=".8"/><circle cx="4" cy="6" r="1.800" fill="#4a5fc8"/><circle cx="8" cy="3" r="2.300" fill="#6a7adf"/></svg>
<div class="a" style="left:75px;top:443px;width:1px;height:13px;background:#8e8e8e;"></div>
<svg class="a" style="left:80px;top:444px" width="11" height="10" viewBox="0 0 11 10"><rect x=".5" y="1.500" width="10" height="8" fill="#eaf0fb" stroke="#4f7fc0" stroke-width=".9"/><path d="M1 3.500h9" stroke="#4f7fc0" stroke-width="1.500"/></svg>
<svg class="a" style="left:94px;top:444px" width="11" height="10" viewBox="0 0 11 10"><rect x=".5" y="2.500" width="9" height="7" fill="#d8d8d8" stroke="#9a9a9a" stroke-width=".9"/><path d="M6 .5l4 4M10 .5l-4 4" stroke="#d04a3a" stroke-width="1"/></svg>
<svg class="a" style="left:108px;top:444px" width="12" height="11" viewBox="0 0 12 11"><circle cx="6" cy="1.500" r="1.200" fill="#333"/><path d="M6 3L4.500 6l2 1.500L5.500 10M4.500 6L2.500 9.500M3 4l3-1 2 2" fill="none" stroke="#333" stroke-width="1"/></svg>
<svg class="a" style="left:122px;top:444px" width="12" height="11" viewBox="0 0 12 11"><circle cx="6" cy="1.500" r="1.200" fill="#333"/><path d="M6 3L4.500 6l2 1.500L5.500 10M4.500 6L2.500 9.500M3 4l3-1 2 2" fill="none" stroke="#333" stroke-width="1"/><path d="M8 7.500h3M8 9.500h3" stroke="#d04a3a" stroke-width="1"/></svg>
<svg class="a" style="left:136px;top:444px" width="12" height="11" viewBox="0 0 12 11"><circle cx="6" cy="1.500" r="1.200" fill="#333"/><path d="M6 3L4.500 6l2 1.500L5.500 10M4.500 6L2.500 9.500M3 4l3-1 2 2" fill="none" stroke="#333" stroke-width="1"/><path d="M8 7.500h3M8 9.500h3" stroke="#4f7fc0" stroke-width="1"/></svg>
<div class="a" style="left:152px;top:443px;width:1px;height:13px;background:#8e8e8e;"></div>
<svg class="a" style="left:158px;top:443px" width="12" height="12" viewBox="0 0 12 12"><circle cx="6" cy="6" r="5.200" fill="#dfe3fb" stroke="#5a5fd8" stroke-width="1"/><circle cx="6" cy="6" r="3.600" fill="none" stroke="#8a8fe8" stroke-width=".7"/><path d="M4.600 4.800c0-2 2.800-2 2.800-.2 0 1.200-1.400 1.200-1.400 2.400" fill="none" stroke="#4a4fd0" stroke-width="1"/><circle cx="6" cy="8.600" r=".6" fill="#4a4fd0"/></svg>
<div class="a" style="left:0px;top:457px;width:221px;height:231px;background:#d6d6d6;"></div>
<svg class="a" style="left:3px;top:460.0px" width="7" height="7" viewBox="0 0 7 7"><path d="M6 .5v5.500H.5z" fill="#2a2a2a"/></svg>
<svg class="a" style="left:16px;top:458.5px" width="11" height="10" viewBox="0 0 11 10"><rect x=".5" y=".5" width="6" height="8" fill="#f7e7c8" stroke="#b98a3a" stroke-width=".8"/><rect x="4" y="2.500" width="6" height="7" fill="#fbf3e0" stroke="#b98a3a" stroke-width=".8"/></svg>
<div class="a t" style="left:30px;top:458.10px;font-size:7.75px;color:#1e1e1e;">Model.Legacy Application</div>
<svg class="a" style="left:32.5px;top:473px" width="8" height="8" viewBox="0 0 8 8"><rect x=".5" y=".5" width="6.500" height="6.500" fill="#f4f4f4" stroke="#5a6fa8" stroke-width=".9"/><path d="M1.800 3.800l1.500 1.600 2.600-3.200" fill="none" stroke="#2a3a8a" stroke-width="1"/></svg>
<svg class="a" style="left:42px;top:471.5px" width="11" height="10" viewBox="0 0 11 10"><rect x=".5" y="3" width="7" height="6" rx="1" fill="#c9d2f2" stroke="#5a6fd0" stroke-width=".8"/><circle cx="4" cy="6" r="1.800" fill="#4a5fc8"/><circle cx="8" cy="3" r="2.300" fill="#8a9ae8"/></svg>
<div class="a t" style="left:56px;top:471.10px;font-size:7.75px;color:#1e1e1e;">Model.Legacy Application</div>
<div class="a" style="left:0px;top:688px;width:221px;height:17px;background:#b0b0b0;"></div>
<div class="a" style="left:0px;top:688px;width:221px;height:1px;background:#8a8a8a;"></div>
<div class="a" style="left:0px;top:689px;width:41px;height:15px;background:#c4c4c4;border-right:1px solid #8a8a8a"></div>
<svg class="a" style="left:2px;top:691px" width="11" height="11" viewBox="0 0 11 11"><circle cx="5.500" cy="6" r="3" fill="#b02020"/><path d="M5.500 1v10M1 6h9M2 2.500l7 7M9 2.500l-7 7" stroke="#2a2a2a" stroke-width=".8"/></svg>
<div class="a t" style="left:14px;top:691.60px;font-size:7.5px;color:#1e1e1e;">Debug</div>
<div class="a" style="left:42px;top:689px;width:81px;height:15px;background:#d6d6d6;border-right:1px solid #8a8a8a;border-left:1px solid #8a8a8a"></div>
<svg class="a" style="left:45px;top:692px" width="11" height="10" viewBox="0 0 11 10"><rect x=".5" y="3" width="7" height="6" rx="1" fill="#c9d2f2" stroke="#5a6fd0" stroke-width=".8"/><circle cx="4" cy="6" r="1.800" fill="#4a5fc8"/><circle cx="8" cy="3" r="2.300" fill="#8a9ae8"/></svg>
<div class="a t" style="left:56px;top:691.60px;font-size:7.4px;color:#1e1e1e;">Execution Analyzer</div>
<svg class="a" style="left:128px;top:691px" width="12" height="11" viewBox="0 0 12 11"><rect x=".5" y="1.500" width="7" height="6" fill="#eaf0fb" stroke="#6a8ac8" stroke-width=".8"/><circle cx="8" cy="7" r="2.800" fill="#e05a3a"/><circle cx="3.500" cy="8.500" r="2" fill="#5a7ad8"/></svg>
<div class="a t" style="left:140px;top:691.60px;font-size:7.5px;color:#1e1e1e;">Call Stack</div>
<div class="a" style="left:224px;top:113px;width:518px;height:19px;background:#ababab;"></div>
<svg class="a" style="left:229px;top:120px" width="8" height="7" viewBox="0 0 8 7"><path d="M.8 .8L3.500 3.500.8 6.200M4.300 .8L7 3.500 4.300 6.200" fill="none" stroke="#1e1e1e" stroke-width="1.200"/></svg>
<svg class="a" style="left:243px;top:118px" width="11" height="10" viewBox="0 0 11 10"><rect x=".5" y=".5" width="4" height="3.500" fill="#fff" stroke="#3b6fc4" stroke-width=".9"/><rect x="6.500" y=".5" width="4" height="3.500" fill="#fff" stroke="#444" stroke-width=".9"/><rect x="6.500" y="6" width="4" height="3.500" fill="#fff" stroke="#444" stroke-width=".9"/><path d="M2.500 4v4h4M4.500 2.200h2" fill="none" stroke="#444" stroke-width=".9"/></svg>
<div class="a t" style="left:266px;top:117.10px;font-size:7.2px;color:#828282;">Class Diagram: "Class Overview"</div>
<svg class="a" style="left:717px;top:121.5px" width="6" height="4" viewBox="0 0 6 4"><path d="M0 0h6l-3 3.500z" fill="#1e1e1e"/></svg>
<svg class="a" style="left:730px;top:120px" width="6" height="6" viewBox="0 0 6 6"><path d="M.5 .5l5 5M5.500 .5l-5 5" stroke="#1e1e1e" stroke-width="1.100"/></svg>
<div class="a" style="left:224px;top:132px;width:518px;height:14px;background:#a8a8a8;"></div>
<div class="a" style="left:224px;top:145px;width:518px;height:1px;background:#5a5a5a;"></div>
<svg class="a" style="left:227px;top:133.5px" width="12" height="12" viewBox="0 0 12 12"><circle cx="6" cy="6" r="5.500" fill="#2f2fe0"/><circle cx="6" cy="6" r="3.200" fill="none" stroke="#fff" stroke-width="1"/><path d="M2.300 2.300l7.400 7.400M9.700 2.300l-7.400 7.400" stroke="#fff" stroke-width="1"/></svg>
<div class="a t" style="left:240px;top:134.10px;font-size:7.8px;color:#1e1e1e;">Start Page</div>
<div class="a" style="left:279px;top:132px;width:87px;height:14px;background:#d2d2d2;border:1px solid #4a4a4a;border-bottom:none"></div>
<svg class="a" style="left:282px;top:134.5px" width="11" height="10" viewBox="0 0 11 10"><rect x=".5" y=".5" width="4" height="3.500" fill="#fff" stroke="#3b6fc4" stroke-width=".9"/><rect x="6.500" y=".5" width="4" height="3.500" fill="#fff" stroke="#444" stroke-width=".9"/><rect x="6.500" y="6" width="4" height="3.500" fill="#fff" stroke="#444" stroke-width=".9"/><path d="M2.500 4v4h4M4.500 2.200h2" fill="none" stroke="#444" stroke-width=".9"/></svg>
<div class="a t" style="left:294px;top:134.10px;font-size:7.1px;color:#111;font-weight:bold;">*Class Overview</div>
<svg class="a" style="left:356px;top:137px" width="6" height="6" viewBox="0 0 6 6"><path d="M.5 .5l5 5M5.500 .5l-5 5" stroke="#1e1e1e" stroke-width="1"/></svg>
<svg class="a" style="left:371px;top:134px" width="9" height="11" viewBox="0 0 9 11"><path d="M.5 .5h5.500l2.500 2.500V10.500h-8z" fill="#fff" stroke="#5f86c6" stroke-width=".8"/><path d="M2 3h3" stroke="#4aa04a" stroke-width="1.200"/><path d="M2 5.500h3" stroke="#c04a4a" stroke-width="1.200"/><path d="M2 8h3" stroke="#c04ac0" stroke-width="1.200"/></svg>
<div class="a t" style="left:382px;top:134.10px;font-size:7.8px;color:#1e1e1e;">CityLoopDlg.cpp</div>
<svg class="a" style="left:719px;top:136.5px" width="5" height="7" viewBox="0 0 5 7"><path d="M4.500 .5v6L.8 3.500z" fill="none" stroke="#333" stroke-width=".8"/></svg>
<svg class="a" style="left:731px;top:136.5px" width="5" height="7" viewBox="0 0 5 7"><path d="M.5 .5v6l3.700-3z" fill="none" stroke="#333" stroke-width=".8"/></svg>
<div class="a" style="left:224px;top:146px;width:1px;height:386px;background:#9a9a9a;"></div>
<div class="a" style="left:225px;top:146px;width:506px;height:375px;background:#fdfcfa;"></div>
<div class="a" style="left:256px;top:171px;width:77px;height:94px;background:linear-gradient(90deg,#fdfbf9 0%,#fcf3ec 45%,#f9e3d4 100%);border:1px solid #3a3a3a;border-radius:3px;box-shadow:1px 1px 0 #bdbdbd"></div>
<div class="a t" style="left:327.5px;top:172.60px;font-size:5.7px;color:#222;font-style:italic;transform:translateX(-100%);">CWinApp</div>
<div class="a t" style="left:294.5px;top:182.10px;font-size:6.2px;color:#000;font-weight:bold;transform:translateX(-50%) scaleX(.87);">CCityLoopApp</div>
<div class="a" style="left:503px;top:171px;width:128px;height:94.5px;background:linear-gradient(90deg,#fdfbf9 0%,#fcf3ec 45%,#f9e3d4 100%);border:1px solid #3a3a3a;border-radius:3px;box-shadow:1px 1px 0 #bdbdbd"></div>
<div class="a t" style="left:625.5px;top:172.60px;font-size:5.7px;color:#222;font-style:italic;transform:translateX(-100%);">CDialog</div>
<div class="a t" style="left:567.0px;top:182.10px;font-size:6.2px;color:#000;font-weight:bold;transform:translateX(-50%) scaleX(.87);">CAboutDlg</div>
<div class="a" style="left:532.5px;top:210.5px;width:70.5px;height:44.0px;background:linear-gradient(90deg,#eafbe6 0%,#d9f6d2 50%,#c3f0b9 100%);border:1px solid #3a3a3a;border-radius:2px"></div>
<div class="a t" style="left:567.75px;top:212.50px;font-size:5.9px;color:#000;transform:translateX(-50%);">«Enumeration»</div>
<div class="a t" style="left:567.75px;top:221.10px;font-size:5.7px;color:#000;font-weight:bold;transform:translateX(-50%);">&lt;anonymous&gt;</div>
<div class="a" style="left:257px;top:343px;width:140px;height:108px;background:linear-gradient(90deg,#fdfbf9 0%,#fcf3ec 45%,#f9e3d4 100%);border:1px solid #3a3a3a;border-radius:3px;box-shadow:1px 1px 0 #bdbdbd"></div>
<div class="a t" style="left:391.5px;top:344.60px;font-size:5.7px;color:#222;font-style:italic;transform:translateX(-100%);">CDialog</div>
<div class="a t" style="left:327.0px;top:354.10px;font-size:6.2px;color:#000;font-weight:bold;transform:translateX(-50%) scaleX(.87);">CControlPanel</div>
<div class="a" style="left:424.5px;top:343px;width:140.0px;height:108px;background:linear-gradient(90deg,#fdfbf9 0%,#fcf3ec 45%,#f9e3d4 100%);border:1px solid #3a3a3a;border-radius:3px;box-shadow:1px 1px 0 #bdbdbd"></div>
<div class="a t" style="left:559.0px;top:344.60px;font-size:5.7px;color:#222;font-style:italic;transform:translateX(-100%);">CDialog</div>
<div class="a t" style="left:494.5px;top:354.10px;font-size:6.2px;color:#000;font-weight:bold;transform:translateX(-50%) scaleX(.87);">CToolBox</div>
<div class="a" style="left:586.5px;top:343px;width:140.0px;height:108px;background:linear-gradient(90deg,#fdfbf9 0%,#fcf3ec 45%,#f9e3d4 100%);border:1px solid #3a3a3a;border-radius:3px;box-shadow:1px 1px 0 #bdbdbd"></div>
<div class="a t" style="left:721.0px;top:344.60px;font-size:5.7px;color:#222;font-style:italic;transform:translateX(-100%);">CDialog</div>
<div class="a t" style="left:656.5px;top:354.10px;font-size:6.2px;color:#000;font-weight:bold;transform:translateX(-50%) scaleX(.87);">CNetwork</div>
<div class="a" style="left:296.500px;top:390.500px;width:78px;height:52px;background:repeating-linear-gradient(135deg,#555 0,#555 .7px,#f4f4f4 .7px,#f4f4f4 2.100px)"></div>
<div class="a" style="left:301.5px;top:395px;width:68.5px;height:43px;background:linear-gradient(90deg,#eafbe6 0%,#d9f6d2 50%,#c3f0b9 100%);border:1px solid #3a3a3a;border-radius:2px"></div>
<div class="a t" style="left:335.75px;top:397.00px;font-size:5.9px;color:#000;transform:translateX(-50%);">«Enumeration»</div>
<div class="a t" style="left:335.75px;top:405.60px;font-size:5.7px;color:#000;font-weight:bold;transform:translateX(-50%);">&lt;anonymous&gt;</div>
<div class="a" style="left:296.5px;top:390.5px;width:5px;height:5px;background:#fff;border:1px solid #222"></div>
<div class="a" style="left:296.5px;top:414px;width:5px;height:5px;background:#fff;border:1px solid #222"></div>
<div class="a" style="left:296.5px;top:437.5px;width:5px;height:5px;background:#fff;border:1px solid #222"></div>
<div class="a" style="left:333px;top:390.5px;width:5px;height:5px;background:#fff;border:1px solid #222"></div>
<div class="a" style="left:333px;top:437.5px;width:5px;height:5px;background:#fff;border:1px solid #222"></div>
<div class="a" style="left:369.5px;top:390.5px;width:5px;height:5px;background:#fff;border:1px solid #222"></div>
<div class="a" style="left:369.5px;top:414px;width:5px;height:5px;background:#fff;border:1px solid #222"></div>
<div class="a" style="left:369.5px;top:437.5px;width:5px;height:5px;background:#fff;border:1px solid #222"></div>
<svg class="a" style="left:379px;top:391px" width="9" height="34" viewBox="0 0 9 34"><path d="M4.500 9.500V1M2.500 3l2-2.300 2 2.300" fill="none" stroke="#111" stroke-width="1"/><circle cx="4" cy="17" r="2.600" fill="none" stroke="#111" stroke-width="1"/><path d="M5.800 15l2.200-2.200M6.500 12.500h1.800v1.800" fill="none" stroke="#111" stroke-width=".9"/><circle cx="3.800" cy="27" r="2.600" fill="none" stroke="#111" stroke-width="1"/><path d="M5.700 29l2.600 2.800" stroke="#111" stroke-width="1.300"/></svg>
<div class="a" style="left:460.5px;top:394.5px;width:70.0px;height:44.0px;background:linear-gradient(90deg,#eafbe6 0%,#d9f6d2 50%,#c3f0b9 100%);border:1px solid #3a3a3a;border-radius:2px"></div>
<div class="a t" style="left:495.5px;top:396.50px;font-size:5.9px;color:#000;transform:translateX(-50%);">«Enumeration»</div>
<div class="a t" style="left:495.5px;top:405.10px;font-size:5.7px;color:#000;font-weight:bold;transform:translateX(-50%);">&lt;anonymous&gt;</div>
<div class="a" style="left:636.5px;top:390px;width:70.0px;height:44px;background:linear-gradient(90deg,#eafbe6 0%,#d9f6d2 50%,#c3f0b9 100%);border:1px solid #3a3a3a;border-radius:2px"></div>
<div class="a t" style="left:671.5px;top:392.00px;font-size:5.9px;color:#000;transform:translateX(-50%);">«Enumeration»</div>
<div class="a t" style="left:671.5px;top:400.60px;font-size:5.7px;color:#000;font-weight:bold;transform:translateX(-50%);">&lt;anonymous&gt;</div>
<div class="a" style="left:728px;top:408px;width:3px;height:1px;background:#222;"></div>
<div class="a" style="left:331.5px;top:452px;width:1px;height:69px;background:#3a3a3a;"></div>
<svg class="a" style="left:327px;top:451.5px" width="10" height="11" viewBox="0 0 10 11"><path d="M1.200 10L5 .8l3.800 9.200" fill="none" stroke="#3a3a3a" stroke-width="1"/></svg>
<div class="a t" style="left:299.5px;top:463.30px;font-size:5.9px;color:#222;">#m_panel</div>
<div class="a" style="left:492.0px;top:452px;width:1px;height:69px;background:#3a3a3a;"></div>
<svg class="a" style="left:487.5px;top:451.5px" width="10" height="11" viewBox="0 0 10 11"><path d="M1.200 10L5 .8l3.800 9.200" fill="none" stroke="#3a3a3a" stroke-width="1"/></svg>
<div class="a t" style="left:455px;top:465.30px;font-size:5.9px;color:#222;">#m_toolbox</div>
<div class="a" style="left:664.0px;top:452px;width:1px;height:69px;background:#3a3a3a;"></div>
<svg class="a" style="left:659.5px;top:451.5px" width="10" height="11" viewBox="0 0 10 11"><path d="M1.200 10L5 .8l3.800 9.200" fill="none" stroke="#3a3a3a" stroke-width="1"/></svg>
<div class="a t" style="left:623.5px;top:462.40px;font-size:5.9px;color:#222;">#m_network</div>
<div class="a" style="left:730.5px;top:146px;width:11.5px;height:375px;background:#6e6e6e;"></div>
<div class="a" style="left:730.5px;top:146px;width:11.5px;height:11px;background:#adadad;border:1px solid #bcbcbc"></div>
<svg class="a" style="left:733.5px;top:149.5px" width="6" height="4" viewBox="0 0 6 4"><path d="M0 4h6L3 0z" fill="#222"/></svg>
<div class="a" style="left:730.5px;top:157px;width:11.5px;height:177px;background:#9b9b9b;"></div>
<div class="a" style="left:730.5px;top:509px;width:11.5px;height:12px;background:#adadad;border:1px solid #bcbcbc"></div>
<svg class="a" style="left:733.5px;top:513px" width="6" height="4" viewBox="0 0 6 4"><path d="M0 0h6L3 4z" fill="#222"/></svg>
<div class="a" style="left:225px;top:521px;width:517px;height:11px;background:#6e6e6e;"></div>
<div class="a" style="left:225px;top:521px;width:11px;height:11px;background:#adadad;border:1px solid #bcbcbc"></div>
<svg class="a" style="left:229px;top:523.5px" width="4" height="6" viewBox="0 0 4 6"><path d="M4 0v6L0 3z" fill="#222"/></svg>
<div class="a" style="left:236px;top:521px;width:266px;height:11px;background:#9b9b9b;"></div>
<div class="a" style="left:719px;top:521px;width:12px;height:11px;background:#adadad;border:1px solid #bcbcbc"></div>
<svg class="a" style="left:723px;top:523.5px" width="4" height="6" viewBox="0 0 4 6"><path d="M0 0v6l4-3z" fill="#222"/></svg>
<div class="a" style="left:731px;top:521px;width:11px;height:11px;background:#8c8c8c;"></div>
<div class="a" style="left:224px;top:532px;width:518px;height:4px;background:#7c7c7c;"></div>
<div class="a" style="left:741px;top:113px;width:2px;height:592px;background:#bdbdbd;"></div>
<div class="a" style="left:743px;top:113px;width:3px;height:592px;background:#666;"></div>
<div class="a" style="left:746px;top:113px;width:512px;height:54px;background:#ababab;"></div>
<div class="a t" style="left:749px;top:119.10px;font-size:12.6px;color:#3c3c3c;line-height:16px;height:16px;margin-top:-2px;-webkit-text-stroke:0;">CityLoopDlg.h</div>
<svg class="a" style="left:1224px;top:123.0px" width="6" height="4" viewBox="0 0 6 4"><path d="M0 0h6l-3 3.500z" fill="#1e1e1e"/></svg>
<svg class="a" style="left:1237.0px;top:120.5px" width="5" height="8" viewBox="0 0 5 8"><path d="M1 .5h3v3.500H1zM0 4h5M2.500 4v3.500" fill="none" stroke="#1e1e1e" stroke-width=".9"/></svg>
<svg class="a" style="left:1248.5px;top:121.5px" width="6" height="6" viewBox="0 0 6 6"><path d="M.5 .5l5 5M5.500 .5l-5 5" stroke="#1e1e1e" stroke-width="1.100"/></svg>
<div class="a t" style="left:746px;top:138.10px;font-size:6.9px;color:#6e6e6e;">%VEA%\Microsoft Native\CityLoop\CityLoopDlg.h</div>
<div class="a" style="left:746px;top:152px;width:513px;height:15px;background:#a6a6a6;"></div>
<div class="a" style="left:748px;top:152px;width:14px;height:14px;background:#989898;"></div>
<div class="a" style="left:764px;top:152px;width:14px;height:14px;background:#989898;"></div>
<svg class="a" style="left:750px;top:153px" width="12" height="12" viewBox="0 0 12 12"><rect x=".5" y="2" width="4.500" height="4" fill="#dfe6fb" stroke="#3b4fc4"/><path d="M5 4h2.500M7.500 2l3 2M7.500 6.500l3 2.500" stroke="#333" stroke-width=".9"/><circle cx="10" cy="2.500" r="1.500" fill="#1aa0a0"/><circle cx="10" cy="9" r="1.500" fill="#c21ac2"/></svg>
<svg class="a" style="left:766px;top:153px" width="12" height="12" viewBox="0 0 12 12"><path d="M1 2h1.500M1 5.500h1.500M1 9h1.500" stroke="#333" stroke-width="1.300"/><path d="M4.500 2h6.500M4.500 5.500h6.500M4.500 9h6.500" stroke="#444" stroke-width="1"/><rect x=".3" y=".3" width="11.400" height="11.400" fill="none" stroke="#666" stroke-width=".6"/></svg>
<svg class="a" style="left:781px;top:153px" width="12" height="12" viewBox="0 0 12 12"><rect x=".5" y="3" width="10" height="7.500" fill="#dfe6fb" stroke="#3b4f94"/><path d="M1 4.500h9" stroke="#3b4fc4" stroke-width="1.600"/><path d="M7 1l3 2.500L7 6" fill="#e8c84a" stroke="#8a6a1a" stroke-width=".7"/></svg>
<svg class="a" style="left:795px;top:158.8px" width="4" height="3" viewBox="0 0 4 3"><path d="M0 0h4l-2 2.400z" fill="#2a2a2a"/></svg>
<svg class="a" style="left:808px;top:153px" width="12" height="12" viewBox="0 0 12 12"><path d="M1.500 .5h5l3 3V11.500h-8z" fill="#fff" stroke="#3b5fb4" stroke-width=".9"/><path d="M3 9l5-5" stroke="#2a4aa8" stroke-width="1.400"/></svg>
<svg class="a" style="left:822px;top:158.8px" width="4" height="3" viewBox="0 0 4 3"><path d="M0 0h4l-2 2.400z" fill="#2a2a2a"/></svg>
<svg class="a" style="left:829px;top:153px" width="12" height="12" viewBox="0 0 12 12"><path d="M.5 .5h6V11.500h-6z" fill="#f8f4e0" stroke="#5f86c6" stroke-width=".9"/><path d="M9 2v7M7 7l2 2.500L11 7" fill="none" stroke="#2a8a2a" stroke-width="1.300"/></svg>
<svg class="a" style="left:845px;top:153px" width="12" height="12" viewBox="0 0 12 12"><path d="M2.500 2.500h7V11.500h-7z" fill="#fff" stroke="#3b5fb4" stroke-width=".9"/><rect x=".5" y=".5" width="5" height="4" fill="#cfe0fb" stroke="#3b5fb4" stroke-width=".8"/><path d="M4 6.500h4M4 8.500h4" stroke="#5f86c6" stroke-width=".8"/></svg>
<div class="a" style="left:860px;top:152px;width:1px;height:13px;background:#8a8a8a;"></div>
<svg class="a" style="left:866px;top:153px" width="12" height="12" viewBox="0 0 12 12"><rect x=".5" y="1" width="6" height="4.500" fill="#f2d36a" stroke="#8a6a1a" stroke-width=".8"/><circle cx="4" cy="8.500" r="2.300" fill="#222"/><circle cx="8.500" cy="8.500" r="2.300" fill="#222"/><path d="M4 6h4.500" stroke="#222" stroke-width="1.400"/></svg>
<svg class="a" style="left:881px;top:153px" width="12" height="12" viewBox="0 0 12 12"><rect x=".5" y="1" width="6" height="4.500" fill="#f2d36a" stroke="#8a6a1a" stroke-width=".8"/><circle cx="6.500" cy="6.500" r="3" fill="#f6d6e6" stroke="#333" stroke-width=".9"/><path d="M8.500 8.500l3 3" stroke="#333" stroke-width="1.400"/></svg>
<svg class="a" style="left:895px;top:153px" width="12" height="12" viewBox="0 0 12 12"><circle cx="5" cy="5" r="3.600" fill="#eef3fb" stroke="#333" stroke-width="1"/><path d="M7.500 7.500l3.500 3.500" stroke="#333" stroke-width="1.500"/><path d="M3.500 5h3" stroke="#3b5fb4" stroke-width="1"/></svg>
<div class="a" style="left:909px;top:152px;width:1px;height:13px;background:#8a8a8a;"></div>
<svg class="a" style="left:916px;top:153px" width="12" height="12" viewBox="0 0 12 12"><rect x=".5" y=".5" width="5" height="4" fill="#f2d36a" stroke="#8a6a1a" stroke-width=".8"/><path d="M3 4.500V9h3" fill="none" stroke="#333" stroke-width=".9"/><rect x="6" y="6.500" width="4.500" height="4" fill="#fff" stroke="#3b5fb4" stroke-width=".9"/></svg>
<svg class="a" style="left:931px;top:153px" width="12" height="12" viewBox="0 0 12 12"><path d="M1 6h4M3 4l2 2-2 2" fill="none" stroke="#3b6fc4" stroke-width="1.100"/><path d="M7 3h3M8.500 3v7" stroke="#333" stroke-width="1.200"/></svg>
<svg class="a" style="left:944px;top:153px" width="12" height="12" viewBox="0 0 12 12"><rect x=".5" y="1" width="11" height="8" fill="#dfe6fb" stroke="#3b4f94"/><rect x="1.500" y="2.500" width="9" height="5" fill="#2a3a6a"/><path d="M3 11l2-2.500L7 11" fill="#2a8a2a"/></svg>
<svg class="a" style="left:959px;top:153px" width="12" height="12" viewBox="0 0 12 12"><rect x=".5" y="1" width="10" height="9" fill="#fff" stroke="#444"/><rect x="1.500" y="3" width="4" height="5" fill="#c21ac2"/><path d="M7 4l3 2-3 2z" fill="#e8c84a" stroke="#8a6a1a" stroke-width=".6"/></svg>
<div class="a" style="left:977px;top:152px;width:97px;height:13px;background:#c9c9c9;border:1px solid #7a7a7a"></div>
<div class="a t" style="left:981px;top:153.60px;font-size:7.6px;color:#111;">CCityLoopDlg</div>
<svg class="a" style="left:1077px;top:153px" width="12" height="12" viewBox="0 0 12 12"><rect x=".5" y=".5" width="9" height="10" fill="#eaf0fb" stroke="#3b5fb4" stroke-width=".9"/><path d="M1 2.200h8" stroke="#3b5fb4" stroke-width="1.500"/><path d="M4 5l5 2.500L4 10z" fill="#e8c84a" stroke="#8a6a1a" stroke-width=".6"/></svg>
<div class="a" style="left:1096px;top:152px;width:145px;height:13px;background:#c9c9c9;border:1px solid #7a7a7a"></div>
<svg class="a" style="left:1244px;top:153px" width="12" height="12" viewBox="0 0 12 12"><path d="M1 8l5-5 2 2-5 5z" fill="#c8a0e0" stroke="#6a4a9a" stroke-width=".7"/><path d="M7 2l3 3-2 1-2-2z" fill="#f2d36a" stroke="#8a6a1a" stroke-width=".7"/><circle cx="10" cy="9" r="1.500" fill="#3b6fc4"/></svg>
<div class="a" style="left:746px;top:167px;width:2px;height:365px;background:#8a8a8a;"></div>
<div class="a" style="left:748px;top:167px;width:164px;height:365px;background:#d6d6d6;"></div>
<svg class="a" style="left:751px;top:171.1px" width="7" height="7" viewBox="0 0 7 7"><path d="M6 .5v5.500H.5z" fill="#2a2a2a"/></svg>
<svg class="a" style="left:768px;top:169.6px" width="8" height="10" viewBox="0 0 8 10"><rect x=".5" y=".5" width="7" height="9" fill="#eef3fb" stroke="#5f86c6"/><rect x="1" y="1" width="6" height="2.200" fill="#6c93d2"/><path d="M1 5.500h6" stroke="#5f86c6" stroke-width=".8"/><rect x="1.600" y="6.300" width="2" height="2" fill="#d98a8a"/></svg>
<div class="a t" style="left:780px;top:169.20px;font-size:7.15px;color:#1e1e1e;-webkit-text-stroke:.08px;">CCityLoopDlg</div>
<svg class="a" style="left:768px;top:184.45px" width="5" height="7" viewBox="0 0 5 7"><path d="M.5 .5v6l3.500-3z" fill="none" stroke="#555" stroke-width=".8"/></svg>
<svg class="a" style="left:783px;top:182.95px" width="8" height="10" viewBox="0 0 8 10"><rect x=".5" y=".5" width="7" height="9" fill="#eef3fb" stroke="#5f86c6"/><rect x="1" y="1" width="6" height="2.200" fill="#6c93d2"/><path d="M1 5.500h6" stroke="#5f86c6" stroke-width=".8"/><rect x="1.600" y="6.300" width="2" height="2" fill="#d98a8a"/></svg>
<div class="a t" style="left:795.5px;top:182.55px;font-size:7.15px;color:#1e1e1e;-webkit-text-stroke:.08px;">«enumeration» &lt;anonymous&gt;</div>
<svg class="a" style="left:784.5px;top:197.29999999999998px" width="8" height="9" viewBox="0 0 8 9"><path d="M4 1.200L7 4.500 4 7.800 1 4.500z" fill="#3f84dc" stroke="#2a5fb0" stroke-width=".6"/><path d="M4 2.400L5.600 4.300H2.400z" fill="#d6e8fb"/></svg>
<div class="a t" style="left:795.5px;top:195.90px;font-size:7.15px;color:#1e1e1e;-webkit-text-stroke:.08px;">m_hIcon</div>
<svg class="a" style="left:784.5px;top:210.64999999999998px" width="8" height="9" viewBox="0 0 8 9"><path d="M4 1.200L7 4.500 4 7.800 1 4.500z" fill="#3f84dc" stroke="#2a5fb0" stroke-width=".6"/><path d="M4 2.400L5.600 4.300H2.400z" fill="#d6e8fb"/></svg>
<div class="a t" style="left:795.5px;top:209.25px;font-size:7.15px;color:#1e1e1e;-webkit-text-stroke:.08px;">m_network</div>
<svg class="a" style="left:784.5px;top:224.0px" width="8" height="9" viewBox="0 0 8 9"><path d="M4 1.200L7 4.500 4 7.800 1 4.500z" fill="#3f84dc" stroke="#2a5fb0" stroke-width=".6"/><path d="M4 2.400L5.600 4.300H2.400z" fill="#d6e8fb"/></svg>
<div class="a t" style="left:795.5px;top:222.60px;font-size:7.15px;color:#1e1e1e;-webkit-text-stroke:.08px;">m_panel</div>
<svg class="a" style="left:784.5px;top:237.35px" width="8" height="9" viewBox="0 0 8 9"><path d="M4 1.200L7 4.500 4 7.800 1 4.500z" fill="#3f84dc" stroke="#2a5fb0" stroke-width=".6"/><path d="M4 2.400L5.600 4.300H2.400z" fill="#d6e8fb"/></svg>
<div class="a t" style="left:795.5px;top:235.95px;font-size:7.15px;color:#1e1e1e;-webkit-text-stroke:.08px;">m_toolbox</div>
<div class="a" style="left:748px;top:167px;width:164px;height:354px;overflow:hidden">
<div class="a t" style="left:47.500px;top:82.30px;font-size:7.150px;-webkit-text-stroke:.08px">CCityLoopDlg()</div>
<div class="a t" style="left:47.500px;top:95.65px;font-size:7.150px;-webkit-text-stroke:.08px">CCityLoopDlg(CWnd*)</div>
<div class="a t" style="left:47.500px;top:109.00px;font-size:7.150px;-webkit-text-stroke:.08px">DoDataExchange(CDataExchange*)</div>
<div class="a t" style="left:47.500px;top:122.35px;font-size:7.150px;-webkit-text-stroke:.08px">DoMsgs()</div>
<div class="a t" style="left:47.500px;top:135.70px;font-size:7.150px;-webkit-text-stroke:.08px">OnInitDialog()</div>
<div class="a t" style="left:47.500px;top:149.05px;font-size:7.150px;-webkit-text-stroke:.08px">OnPaint()</div>
<div class="a t" style="left:47.500px;top:162.40px;font-size:7.150px;-webkit-text-stroke:.08px">OnQueryDragIcon()</div>
<div class="a t" style="left:47.500px;top:175.75px;font-size:7.150px;-webkit-text-stroke:.08px">OnSysCommand(UINT, LPARAM)</div>
<div class="a t" style="left:47.500px;top:189.10px;font-size:7.150px;-webkit-text-stroke:.08px">OnWindowPosChanged(WINDOWPOS*)</div>
<div class="a t" style="left:47.500px;top:202.45px;font-size:7.150px;-webkit-text-stroke:.08px">Quit()</div>
<div class="a t" style="left:47.500px;top:215.80px;font-size:7.150px;-webkit-text-stroke:.08px">WindowProc(UINT, WPARAM, LPARAM)</div>
<div class="a t" style="left:47.500px;top:229.15px;font-size:7.150px;-webkit-text-stroke:.08px">~CCityLoopDlg()</div>
</div>
<svg class="a" style="left:782px;top:250.7px" width="11" height="9" viewBox="0 0 11 9"><path d="M1.500 3.700h3M1.500 5.300h3" stroke="#a8a8a8" stroke-width=".9"/><path d="M7.500 1.200l3 3.300-3 3.300-3-3.300z" fill="#c626cc" stroke="#8a1a90" stroke-width=".6"/><path d="M7.500 2.400l1.600 1.900H5.900z" fill="#f2c6f4"/></svg>
<svg class="a" style="left:782px;top:264.05px" width="11" height="9" viewBox="0 0 11 9"><path d="M1.500 3.700h3M1.500 5.300h3" stroke="#a8a8a8" stroke-width=".9"/><path d="M7.500 1.200l3 3.300-3 3.300-3-3.300z" fill="#c626cc" stroke="#8a1a90" stroke-width=".6"/><path d="M7.500 2.400l1.600 1.900H5.900z" fill="#f2c6f4"/></svg>
<svg class="a" style="left:782px;top:277.4px" width="11" height="9" viewBox="0 0 11 9"><path d="M1.500 3.700h3M1.500 5.300h3" stroke="#a8a8a8" stroke-width=".9"/><path d="M7.500 1.200l3 3.300-3 3.300-3-3.300z" fill="#c626cc" stroke="#8a1a90" stroke-width=".6"/><path d="M7.500 2.400l1.600 1.900H5.900z" fill="#f2c6f4"/></svg>
<svg class="a" style="left:782px;top:290.75px" width="11" height="9" viewBox="0 0 11 9"><path d="M1.500 3.700h3M1.500 5.300h3" stroke="#a8a8a8" stroke-width=".9"/><path d="M7.500 1.200l3 3.300-3 3.300-3-3.300z" fill="#c626cc" stroke="#8a1a90" stroke-width=".6"/><path d="M7.500 2.400l1.600 1.900H5.900z" fill="#f2c6f4"/></svg>
<svg class="a" style="left:782px;top:304.1px" width="11" height="9" viewBox="0 0 11 9"><path d="M1.500 3.700h3M1.500 5.300h3" stroke="#a8a8a8" stroke-width=".9"/><path d="M7.500 1.200l3 3.300-3 3.300-3-3.300z" fill="#c626cc" stroke="#8a1a90" stroke-width=".6"/><path d="M7.500 2.400l1.600 1.900H5.900z" fill="#f2c6f4"/></svg>
<svg class="a" style="left:782px;top:317.45px" width="11" height="9" viewBox="0 0 11 9"><path d="M1.500 3.700h3M1.500 5.300h3" stroke="#a8a8a8" stroke-width=".9"/><path d="M7.500 1.200l3 3.300-3 3.300-3-3.300z" fill="#c626cc" stroke="#8a1a90" stroke-width=".6"/><path d="M7.500 2.400l1.600 1.900H5.900z" fill="#f2c6f4"/></svg>
<svg class="a" style="left:782px;top:330.79999999999995px" width="11" height="9" viewBox="0 0 11 9"><path d="M1.500 3.700h3M1.500 5.300h3" stroke="#a8a8a8" stroke-width=".9"/><path d="M7.500 1.200l3 3.300-3 3.300-3-3.300z" fill="#c626cc" stroke="#8a1a90" stroke-width=".6"/><path d="M7.500 2.400l1.600 1.900H5.900z" fill="#f2c6f4"/></svg>
<svg class="a" style="left:782px;top:344.15px" width="11" height="9" viewBox="0 0 11 9"><path d="M1.500 3.700h3M1.500 5.300h3" stroke="#a8a8a8" stroke-width=".9"/><path d="M7.500 1.200l3 3.300-3 3.300-3-3.300z" fill="#c626cc" stroke="#8a1a90" stroke-width=".6"/><path d="M7.500 2.400l1.600 1.900H5.900z" fill="#f2c6f4"/></svg>
<svg class="a" style="left:782px;top:357.5px" width="11" height="9" viewBox="0 0 11 9"><path d="M1.500 3.700h3M1.500 5.300h3" stroke="#a8a8a8" stroke-width=".9"/><path d="M7.500 1.200l3 3.300-3 3.300-3-3.300z" fill="#c626cc" stroke="#8a1a90" stroke-width=".6"/><path d="M7.500 2.400l1.600 1.900H5.900z" fill="#f2c6f4"/></svg>
<svg class="a" style="left:782px;top:370.85px" width="11" height="9" viewBox="0 0 11 9"><path d="M1.500 3.700h3M1.500 5.300h3" stroke="#a8a8a8" stroke-width=".9"/><path d="M7.500 1.200l3 3.300-3 3.300-3-3.300z" fill="#c626cc" stroke="#8a1a90" stroke-width=".6"/><path d="M7.500 2.400l1.600 1.900H5.900z" fill="#f2c6f4"/></svg>
<svg class="a" style="left:782px;top:384.2px" width="11" height="9" viewBox="0 0 11 9"><path d="M1.500 3.700h3M1.500 5.300h3" stroke="#a8a8a8" stroke-width=".9"/><path d="M7.500 1.200l3 3.300-3 3.300-3-3.300z" fill="#c626cc" stroke="#8a1a90" stroke-width=".6"/><path d="M7.500 2.400l1.600 1.900H5.900z" fill="#f2c6f4"/></svg>
<svg class="a" style="left:782px;top:397.54999999999995px" width="11" height="9" viewBox="0 0 11 9"><path d="M1.500 3.700h3M1.500 5.300h3" stroke="#a8a8a8" stroke-width=".9"/><path d="M7.500 1.200l3 3.300-3 3.300-3-3.300z" fill="#c626cc" stroke="#8a1a90" stroke-width=".6"/><path d="M7.500 2.400l1.600 1.900H5.900z" fill="#f2c6f4"/></svg>
<div class="a" style="left:912px;top:167px;width:6px;height:365px;background:#a6a6a6;"></div>
<div class="a" style="left:912px;top:167px;width:1px;height:365px;background:#8a8a8a;"></div>
<div class="a" style="left:914px;top:346px;width:1px;height:1px;background:#333;"></div>
<div class="a" style="left:914px;top:349px;width:1px;height:1px;background:#333;"></div>
<div class="a" style="left:914px;top:352px;width:1px;height:1px;background:#333;"></div>
<div class="a" style="left:918px;top:167px;width:331px;height:354px;background:#fff;"></div>
<div class="a" style="left:918px;top:167px;width:9px;height:354px;background:#e9e9e9;"></div>
<div class="a" style="left:918px;top:167px;width:331px;height:354px;overflow:hidden;font-family:'Liberation Mono',monospace;font-size:7.780px;font-weight:normal;color:#1a1a1a">
<div class="a t" style="left:0;top:1.40px;width:37.500px;text-align:right;color:#2a7a5a;-webkit-text-stroke:.24px #2a7a5a">1</div>
<div class="a t" style="left:41.400px;top:1.40px;white-space:pre;-webkit-text-stroke-width:.24px"><span style="color:#1c8a1c">///////////////////////////////////////////////////////////</span></div>
<div class="a t" style="left:0;top:12.06px;width:37.500px;text-align:right;color:#2a7a5a;-webkit-text-stroke:.24px #2a7a5a">2</div>
<div class="a t" style="left:41.400px;top:12.06px;white-space:pre;-webkit-text-stroke-width:.24px"><span style="color:#1c8a1c">//  CityLoopDlg.h</span></div>
<div class="a t" style="left:0;top:22.73px;width:37.500px;text-align:right;color:#2a7a5a;-webkit-text-stroke:.24px #2a7a5a">3</div>
<div class="a t" style="left:41.400px;top:22.73px;white-space:pre;-webkit-text-stroke-width:.24px"><span style="color:#1c8a1c">//  Implementation of the Class CCityLoopDlg</span></div>
<div class="a t" style="left:0;top:33.39px;width:37.500px;text-align:right;color:#2a7a5a;-webkit-text-stroke:.24px #2a7a5a">4</div>
<div class="a t" style="left:41.400px;top:33.39px;white-space:pre;-webkit-text-stroke-width:.24px"><span style="color:#1c8a1c">//  Created on:      08-Sep-2016 4:11:17 PM</span></div>
<div class="a t" style="left:0;top:44.06px;width:37.500px;text-align:right;color:#2a7a5a;-webkit-text-stroke:.24px #2a7a5a">5</div>
<div class="a t" style="left:41.400px;top:44.06px;white-space:pre;-webkit-text-stroke-width:.24px"><span style="color:#1c8a1c">//  Original author: sparxsys</span></div>
<div class="a t" style="left:0;top:54.72px;width:37.500px;text-align:right;color:#2a7a5a;-webkit-text-stroke:.24px #2a7a5a">6</div>
<div class="a t" style="left:41.400px;top:54.72px;white-space:pre;-webkit-text-stroke-width:.24px"><span style="color:#1c8a1c">///////////////////////////////////////////////////////////</span></div>
<div class="a t" style="left:0;top:65.38px;width:37.500px;text-align:right;color:#2a7a5a;-webkit-text-stroke:.24px #2a7a5a">7</div>
<div class="a t" style="left:0;top:76.05px;width:37.500px;text-align:right;color:#2a7a5a;-webkit-text-stroke:.24px #2a7a5a">8</div>
<div class="a t" style="left:41.400px;top:76.05px;white-space:pre;-webkit-text-stroke-width:.24px"><span style="color:#7a7a14">#if</span> !defined(EA_147166EB_824A_46fb_AFE6_5F2BB6580928__INCLUDED_)</div>
<div class="a t" style="left:0;top:86.71px;width:37.500px;text-align:right;color:#2a7a5a;-webkit-text-stroke:.24px #2a7a5a">9</div>
<div class="a t" style="left:41.400px;top:86.71px;white-space:pre;-webkit-text-stroke-width:.24px"><span style="color:#7a7a14">#define</span> EA_147166EB_824A_46fb_AFE6_5F2BB6580928__INCLUDED_</div>
<div class="a t" style="left:0;top:97.38px;width:37.500px;text-align:right;color:#2a7a5a;-webkit-text-stroke:.24px #2a7a5a">10</div>
<div class="a t" style="left:0;top:108.04px;width:37.500px;text-align:right;color:#2a7a5a;-webkit-text-stroke:.24px #2a7a5a">11</div>
<div class="a t" style="left:41.400px;top:108.04px;white-space:pre;-webkit-text-stroke-width:.24px"><span style="color:#7a7a14">#include</span> <span style="color:#a01818">"Microsoft Native\CityLoop\Network.h"</span></div>
<div class="a t" style="left:0;top:118.70px;width:37.500px;text-align:right;color:#2a7a5a;-webkit-text-stroke:.24px #2a7a5a">12</div>
<div class="a t" style="left:41.400px;top:118.70px;white-space:pre;-webkit-text-stroke-width:.24px"><span style="color:#7a7a14">#include</span> <span style="color:#a01818">"Microsoft Native\CityLoop\ControlPanel.h"</span></div>
<div class="a t" style="left:0;top:129.37px;width:37.500px;text-align:right;color:#2a7a5a;-webkit-text-stroke:.24px #2a7a5a">13</div>
<div class="a t" style="left:41.400px;top:129.37px;white-space:pre;-webkit-text-stroke-width:.24px"><span style="color:#7a7a14">#include</span> <span style="color:#a01818">"Microsoft Native\CityLoop\ToolBox.h"</span></div>
<div class="a t" style="left:0;top:140.03px;width:37.500px;text-align:right;color:#2a7a5a;-webkit-text-stroke:.24px #2a7a5a">14</div>
<div class="a t" style="left:0;top:150.70px;width:37.500px;text-align:right;color:#2a7a5a;-webkit-text-stroke:.24px #2a7a5a">15</div>
<div class="a t" style="left:41.400px;top:150.70px;white-space:pre;-webkit-text-stroke-width:.24px"><span style="color:#1c8a1c">/**</span></div>
<div class="a t" style="left:0;top:161.36px;width:37.500px;text-align:right;color:#2a7a5a;-webkit-text-stroke:.24px #2a7a5a">16</div>
<div class="a t" style="left:41.400px;top:161.36px;white-space:pre;-webkit-text-stroke-width:.24px"><span style="color:#1c8a1c"> * CCityLoopDlg dialog</span></div>
<div class="a t" style="left:0;top:172.02px;width:37.500px;text-align:right;color:#2a7a5a;-webkit-text-stroke:.24px #2a7a5a">17</div>
<div class="a t" style="left:41.400px;top:172.02px;white-space:pre;-webkit-text-stroke-width:.24px"><span style="color:#1c8a1c"> */</span></div>
<div class="a t" style="left:0;top:182.69px;width:37.500px;text-align:right;color:#2a7a5a;-webkit-text-stroke:.24px #2a7a5a">18</div>
<div class="a t" style="left:41.400px;top:182.69px;white-space:pre;-webkit-text-stroke-width:.24px"><span style="color:#1414f0">class</span> <span style="background:#c8c8c8">CCityLoopDlg</span> : <span style="color:#1414f0">public</span> CDialog</div>
<div class="a t" style="left:0;top:193.35px;width:37.500px;text-align:right;color:#2a7a5a;-webkit-text-stroke:.24px #2a7a5a">19</div>
<div class="a t" style="left:41.400px;top:193.35px;white-space:pre;-webkit-text-stroke-width:.24px">{</div>
<div class="a t" style="left:0;top:204.02px;width:37.500px;text-align:right;color:#2a7a5a;-webkit-text-stroke:.24px #2a7a5a">20</div>
<div class="a t" style="left:0;top:214.68px;width:37.500px;text-align:right;color:#2a7a5a;-webkit-text-stroke:.24px #2a7a5a">21</div>
<div class="a t" style="left:41.400px;top:214.68px;white-space:pre;-webkit-text-stroke-width:.24px"><span style="color:#1414f0">public</span>:</div>
<div class="a t" style="left:0;top:225.34px;width:37.500px;text-align:right;color:#2a7a5a;-webkit-text-stroke:.24px #2a7a5a">22</div>
<div class="a t" style="left:41.400px;top:225.34px;white-space:pre;-webkit-text-stroke-width:.24px"><span style="color:#1c8a1c">    /**</span></div>
<div class="a t" style="left:0;top:236.01px;width:37.500px;text-align:right;color:#2a7a5a;-webkit-text-stroke:.24px #2a7a5a">23</div>
<div class="a t" style="left:41.400px;top:236.01px;white-space:pre;-webkit-text-stroke-width:.24px"><span style="color:#1c8a1c">     * Dialog Data</span></div>
<div class="a t" style="left:0;top:246.67px;width:37.500px;text-align:right;color:#2a7a5a;-webkit-text-stroke:.24px #2a7a5a">24</div>
<div class="a t" style="left:41.400px;top:246.67px;white-space:pre;-webkit-text-stroke-width:.24px"><span style="color:#1c8a1c">     */</span></div>
<div class="a t" style="left:0;top:257.34px;width:37.500px;text-align:right;color:#2a7a5a;-webkit-text-stroke:.24px #2a7a5a">25</div>
<div class="a t" style="left:41.400px;top:257.34px;white-space:pre;-webkit-text-stroke-width:.24px">    <span style="color:#1414f0">enum</span></div>
<div class="a t" style="left:0;top:268.00px;width:37.500px;text-align:right;color:#2a7a5a;-webkit-text-stroke:.24px #2a7a5a">26</div>
<div class="a t" style="left:41.400px;top:268.00px;white-space:pre;-webkit-text-stroke-width:.24px">    {</div>
<div class="a t" style="left:0;top:278.66px;width:37.500px;text-align:right;color:#2a7a5a;-webkit-text-stroke:.24px #2a7a5a">27</div>
<div class="a t" style="left:41.400px;top:278.66px;white-space:pre;-webkit-text-stroke-width:.24px">        IDD = IDD_SUBWAY_DIALOG</div>
<div class="a t" style="left:0;top:289.33px;width:37.500px;text-align:right;color:#2a7a5a;-webkit-text-stroke:.24px #2a7a5a">28</div>
<div class="a t" style="left:41.400px;top:289.33px;white-space:pre;-webkit-text-stroke-width:.24px">    };</div>
<div class="a t" style="left:0;top:299.99px;width:37.500px;text-align:right;color:#2a7a5a;-webkit-text-stroke:.24px #2a7a5a">29</div>
<div class="a t" style="left:0;top:310.66px;width:37.500px;text-align:right;color:#2a7a5a;-webkit-text-stroke:.24px #2a7a5a">30</div>
<div class="a t" style="left:0;top:321.32px;width:37.500px;text-align:right;color:#2a7a5a;-webkit-text-stroke:.24px #2a7a5a">31</div>
<div class="a t" style="left:41.400px;top:321.32px;white-space:pre;-webkit-text-stroke-width:.24px">    CCityLoopDlg();</div>
<div class="a t" style="left:0;top:331.98px;width:37.500px;text-align:right;color:#2a7a5a;-webkit-text-stroke:.24px #2a7a5a">32</div>
<div class="a t" style="left:41.400px;top:331.98px;white-space:pre;-webkit-text-stroke-width:.24px">    <span style="color:#1414f0">virtual</span> ~CCityLoopDlg();</div>
<div class="a t" style="left:0;top:342.65px;width:37.500px;text-align:right;color:#2a7a5a;-webkit-text-stroke:.24px #2a7a5a">33</div>
<div class="a" style="left:60px;top:224px;width:1px;height:32px;background:#d0d0d0"></div>
</div>
<div class="a" style="left:1249px;top:167px;width:10px;height:354px;background:#6e6e6e;"></div>
<div class="a" style="left:1249px;top:167px;width:10px;height:11px;background:#adadad;border:1px solid #bcbcbc"></div>
<svg class="a" style="left:1251px;top:171px" width="6" height="4" viewBox="0 0 6 4"><path d="M0 4h6L3 0z" fill="#222"/></svg>
<div class="a" style="left:1249px;top:178px;width:10px;height:124px;background:#9b9b9b;"></div>
<div class="a" style="left:1249px;top:510px;width:10px;height:11px;background:#adadad;border:1px solid #bcbcbc"></div>
<svg class="a" style="left:1251px;top:514px" width="6" height="4" viewBox="0 0 6 4"><path d="M0 0h6L3 4z" fill="#222"/></svg>
<div class="a" style="left:918px;top:521px;width:341px;height:11px;background:#6e6e6e;"></div>
<div class="a" style="left:918px;top:521px;width:10px;height:11px;background:#adadad;border:1px solid #bcbcbc"></div>
<svg class="a" style="left:921px;top:523.5px" width="4" height="6" viewBox="0 0 4 6"><path d="M4 0v6L0 3z" fill="#222"/></svg>
<div class="a" style="left:928px;top:521px;width:70px;height:11px;background:#9b9b9b;"></div>
<div class="a" style="left:1237px;top:521px;width:12px;height:11px;background:#adadad;border:1px solid #bcbcbc"></div>
<svg class="a" style="left:1241px;top:523.5px" width="4" height="6" viewBox="0 0 4 6"><path d="M0 0v6l4-3z" fill="#222"/></svg>
<div class="a" style="left:1249px;top:521px;width:10px;height:11px;background:#8c8c8c;"></div>
<div class="a" style="left:746px;top:532px;width:513px;height:4px;background:#7c7c7c;"></div>
<div class="a" style="left:1259px;top:113px;width:21px;height:592px;background:#ababab;"></div>
<div class="a t" style="left:1262px;top:118px;font-size:8.300px;color:#222;transform-origin:0 0;transform:translate(11px,0) rotate(90deg)">Start</div>
<div class="a" style="left:1276.5px;top:118px;width:3px;height:17.5px;background:#c2c2c2;"></div>
<div class="a" style="left:224px;top:536px;width:518px;height:43px;background:#ababab;"></div>
<div class="a t" style="left:228px;top:542.90px;font-size:12.6px;color:#3c3c3c;line-height:16px;height:16px;margin-top:-2px;-webkit-text-stroke:0;">Breakpoints &amp; Markers</div>
<svg class="a" style="left:706.5px;top:546.8px" width="6" height="4" viewBox="0 0 6 4"><path d="M0 0h6l-3 3.500z" fill="#1e1e1e"/></svg>
<svg class="a" style="left:719.5px;top:544.3px" width="5" height="8" viewBox="0 0 5 8"><path d="M1 .5h3v3.500H1zM0 4h5M2.500 4v3.500" fill="none" stroke="#1e1e1e" stroke-width=".9"/></svg>
<svg class="a" style="left:731.5px;top:545.3px" width="6" height="6" viewBox="0 0 6 6"><path d="M.5 .5l5 5M5.500 .5l-5 5" stroke="#1e1e1e" stroke-width="1.100"/></svg>
<div class="a" style="left:224px;top:559px;width:518px;height:20px;background:#ababab;"></div>
<svg class="a" style="left:228px;top:564px" width="11" height="11" viewBox="0 0 11 11"><path d="M2 6V3.500a.8 .8 0 011.600 0V2.500a.8 .8 0 011.600 0V2.800a.8 .8 0 011.600 0V3.500a.8 .8 0 011.600 0V7.500c0 2-1 3-3 3s-3-1-4-3.500z" fill="#e8d4a8" stroke="#9a8a6a" stroke-width=".7"/></svg>
<svg class="a" style="left:243px;top:564px" width="11" height="11" viewBox="0 0 11 11"><path d="M2 6V3.500a.8 .8 0 011.600 0V2.500a.8 .8 0 011.600 0V2.800a.8 .8 0 011.600 0V3.500a.8 .8 0 011.600 0V7.500c0 2-1 3-3 3s-3-1-4-3.500z" fill="#e8d4a8" stroke="#9a8a6a" stroke-width=".7"/></svg>
<svg class="a" style="left:243px;top:563px" width="12" height="12" viewBox="0 0 12 12"><path d="M6 1l1.200 3.200L10.500 3 8.500 6l2.500 2.500-3.300-.3L6.500 11.500 5.500 8 2 9l2-2.800L1.500 3.500l3.300.8z" fill="#e8902a" stroke="#c8201a" stroke-width=".7"/></svg>
<svg class="a" style="left:258px;top:564px" width="11" height="11" viewBox="0 0 11 11"><path d="M2 6V3.500a.8 .8 0 011.600 0V2.500a.8 .8 0 011.600 0V2.800a.8 .8 0 011.600 0V3.500a.8 .8 0 011.600 0V7.500c0 2-1 3-3 3s-3-1-4-3.500z" fill="#f0f0f0" stroke="#9a8a6a" stroke-width=".7"/></svg>
<div class="a" style="left:272px;top:563px;width:31px;height:11.5px;background:#d8d8d8;border:1px solid #7a7a7a"></div>
<div class="a t" style="left:274px;top:563.10px;font-size:7.6px;color:#111;">3</div>
<svg class="a" style="left:296px;top:564px" width="5" height="9" viewBox="0 0 5 9"><path d="M0 3.500h5L2.500 .8zM0 5.500h5L2.500 8.200z" fill="#222"/></svg>
<div class="a" style="left:307.5px;top:561px;width:1px;height:15px;background:#8e8e8e;"></div>
<div class="a" style="left:311px;top:562px;width:97px;height:14px;background:#c9c9c9;border:1px solid #7a7a7a"></div>
<div class="a t" style="left:315px;top:563.60px;font-size:7.6px;color:#111;">Default</div>
<svg class="a" style="left:401.5px;top:568.3px" width="4" height="3" viewBox="0 0 4 3"><path d="M0 0h4l-2 2.400z" fill="#2a2a2a"/></svg>
<svg class="a" style="left:414px;top:564px" width="10" height="10" viewBox="0 0 10 10"><rect x=".5" y=".5" width="8.500" height="8.500" fill="#e6ebfb" stroke="#4a5fd0" stroke-width=".9"/><path d="M1 2h7.500" stroke="#4a5fd0" stroke-width="1"/></svg>
<svg class="a" style="left:427px;top:568.8px" width="4" height="3" viewBox="0 0 4 3"><path d="M0 0h4l-2 2.400z" fill="#2a2a2a"/></svg>
<svg class="a" style="left:437px;top:564px" width="10" height="10" viewBox="0 0 10 10"><rect x=".5" y=".5" width="8.500" height="8.500" fill="#e6ebfb" stroke="#4a5fd0" stroke-width=".9"/><path d="M1 4.500h8M4.500 1v8" stroke="#4a5fd0" stroke-width="1"/></svg>
<svg class="a" style="left:450px;top:568.8px" width="4" height="3" viewBox="0 0 4 3"><path d="M0 0h4l-2 2.400z" fill="#2a2a2a"/></svg>
<svg class="a" style="left:457px;top:563.5px" width="12" height="12" viewBox="0 0 12 12"><circle cx="6" cy="6" r="5.200" fill="#dfe3fb" stroke="#5a5fd8" stroke-width="1"/><circle cx="6" cy="6" r="3.600" fill="none" stroke="#8a8fe8" stroke-width=".7"/><path d="M4.600 4.800c0-2 2.800-2 2.800-.2 0 1.200-1.400 1.200-1.400 2.400" fill="none" stroke="#4a4fd0" stroke-width="1"/><circle cx="6" cy="8.600" r=".6" fill="#4a4fd0"/></svg>
<div class="a" style="left:226px;top:579px;width:516px;height:14px;background:#ababab;"></div>
<div class="a t" style="left:229px;top:580.90px;font-size:7.6px;color:#222;">Enabled</div>
<div class="a t" style="left:282px;top:580.90px;font-size:7.6px;color:#222;">Line</div>
<div class="a t" style="left:322px;top:580.90px;font-size:7.6px;color:#222;">Source</div>
<div class="a t" style="left:469px;top:580.90px;font-size:7.6px;color:#222;">Details</div>
<div class="a" style="left:224px;top:579px;width:1.5px;height:97px;background:#a0a0a0;"></div>
<div class="a" style="left:225.5px;top:593px;width:516.5px;height:83px;background:#d6d6d6;"></div>
<div class="a" style="left:278.5px;top:593px;width:1px;height:83px;background:#b4b4b4;"></div>
<div class="a" style="left:318px;top:593px;width:1px;height:83px;background:#b4b4b4;"></div>
<div class="a" style="left:465.5px;top:593px;width:1px;height:83px;background:#b4b4b4;"></div>
<div class="a" style="left:612px;top:593px;width:1px;height:83px;background:#b4b4b4;"></div>
<svg class="a" style="left:242px;top:596px" width="8" height="8" viewBox="0 0 8 8"><circle cx="4" cy="4" r="3.600" fill="#d6281a" stroke="#8a1a10" stroke-width=".6"/><circle cx="3" cy="3" r="1.200" fill="#f08a7a"/></svg>
<div class="a" style="left:256px;top:596px;width:8px;height:8px;background:#fff;border:1px solid #222"></div>
<svg class="a" style="left:257px;top:597px" width="6" height="6" viewBox="0 0 6 6"><path d="M1 3l1.500 1.800L5 1.200" fill="none" stroke="#111" stroke-width="1.100"/></svg>
<div class="a t" style="left:283px;top:594.60px;font-size:7.6px;color:#111;">31</div>
<div class="a t" style="left:322px;top:594.60px;font-size:7.2px;color:#222;">%VEA%\Microsoft Native\CityLoop\Train....</div>
<div class="a" style="left:226px;top:676px;width:516px;height:12px;background:#a9a9a9;"></div>
<div class="a" style="left:226px;top:676px;width:516px;height:1px;background:#7a7a7a;"></div>
<svg class="a" style="left:225.5px;top:679px" width="7" height="7" viewBox="0 0 7 7"><path d="M1 1v5M6 1v5L2.500 3.500z" fill="#222" stroke="#222" stroke-width=".8"/></svg>
<svg class="a" style="left:236.5px;top:679px" width="7" height="7" viewBox="0 0 7 7"><path d="M5 1v5L1.500 3.500z" fill="#222" stroke="#222" stroke-width=".8"/></svg>
<svg class="a" style="left:247.0px;top:679px" width="7" height="7" viewBox="0 0 7 7"><path d="M2 1v5l3.500-2.500z" fill="#222" stroke="#222" stroke-width=".8"/></svg>
<svg class="a" style="left:257.5px;top:679px" width="7" height="7" viewBox="0 0 7 7"><path d="M6 1v5M1 1v5l3.500-2.500z" fill="#222" stroke="#222" stroke-width=".8"/></svg>
<svg class="a" style="left:266px;top:676px" width="82" height="12" viewBox="0 0 82 12"><path d="M0 .5L6 11.500H74L80 .5" fill="#e4e4e4" stroke="#333" stroke-width=".9"/></svg>
<div class="a t" style="left:275px;top:676.90px;font-size:7.1px;color:#111;font-weight:bold;">Debug Breakpoints</div>
<svg class="a" style="left:344px;top:676px" width="92" height="12" viewBox="0 0 92 12"><path d="M2 11.500L7 .5M2 11.500H84L90 .5" fill="none" stroke="#333" stroke-width=".9"/></svg>
<div class="a t" style="left:351px;top:676.90px;font-size:7.4px;color:#222;">Simulation Breakpoints</div>
<div class="a" style="left:491px;top:677px;width:3px;height:10px;background:#e8e8e8;border:1px solid #222"></div>
<div class="a" style="left:495px;top:677px;width:236px;height:11px;background:#6e6e6e;"></div>
<div class="a" style="left:495px;top:677px;width:10px;height:11px;background:#adadad;border:1px solid #bcbcbc"></div>
<svg class="a" style="left:498px;top:679.5px" width="4" height="6" viewBox="0 0 4 6"><path d="M4 0v6L0 3z" fill="#222"/></svg>
<div class="a" style="left:505px;top:677px;width:141px;height:11px;background:#9b9b9b;"></div>
<div class="a" style="left:719px;top:677px;width:12px;height:11px;background:#adadad;border:1px solid #bcbcbc"></div>
<svg class="a" style="left:723px;top:679.5px" width="4" height="6" viewBox="0 0 4 6"><path d="M0 0v6l4-3z" fill="#222"/></svg>
<div class="a" style="left:224px;top:688px;width:518px;height:17px;background:#b0b0b0;"></div>
<div class="a" style="left:224px;top:688px;width:518px;height:1px;background:#8a8a8a;"></div>
<div class="a" style="left:226px;top:689px;width:102px;height:15px;background:#d6d6d6;border-right:1px solid #8a8a8a"></div>
<svg class="a" style="left:229px;top:692.5px" width="8" height="8" viewBox="0 0 8 8"><circle cx="4" cy="4" r="3.600" fill="#d6281a" stroke="#8a1a10" stroke-width=".6"/></svg>
<div class="a t" style="left:240px;top:691.60px;font-size:7.7px;color:#1e1e1e;">Breakpoints &amp; Markers</div>
<svg class="a" style="left:333px;top:692.5px" width="9" height="9" viewBox="0 0 9 9"><path d="M1 1l7 7M8 1L1 8" stroke="#3b6fd4" stroke-width="1.200" stroke-dasharray="2 1.200"/></svg>
<div class="a t" style="left:344px;top:691.60px;font-size:7.7px;color:#1e1e1e;">Profiler</div>
<div class="a" style="left:746px;top:536px;width:513px;height:40px;background:#ababab;"></div>
<div class="a t" style="left:749px;top:543.30px;font-size:12.4px;color:#3c3c3c;line-height:16px;height:16px;margin-top:-2px;-webkit-text-stroke:0;">Locals</div>
<svg class="a" style="left:1224px;top:547.2px" width="6" height="4" viewBox="0 0 6 4"><path d="M0 0h6l-3 3.500z" fill="#1e1e1e"/></svg>
<svg class="a" style="left:1237.0px;top:544.7px" width="5" height="8" viewBox="0 0 5 8"><path d="M1 .5h3v3.500H1zM0 4h5M2.500 4v3.500" fill="none" stroke="#1e1e1e" stroke-width=".9"/></svg>
<svg class="a" style="left:1249px;top:545.7px" width="6" height="6" viewBox="0 0 6 6"><path d="M.5 .5l5 5M5.500 .5l-5 5" stroke="#1e1e1e" stroke-width="1.100"/></svg>
<div class="a t" style="left:749.5px;top:562.90px;font-size:7.6px;color:#222;">Variable</div>
<div class="a t" style="left:833px;top:562.90px;font-size:7.6px;color:#222;">Value</div>
<div class="a t" style="left:916.5px;top:562.90px;font-size:7.6px;color:#222;">Type</div>
<div class="a t" style="left:1000px;top:562.90px;font-size:7.6px;color:#222;">Address</div>
<div class="a" style="left:746px;top:576px;width:513px;height:113px;background:#d6d6d6;"></div>
<div class="a" style="left:746px;top:688px;width:513px;height:1px;background:#f0f0f0;"></div>
<div class="a" style="left:746px;top:689px;width:513px;height:16px;background:#b0b0b0;"></div>
<div class="a" style="left:746px;top:689px;width:513px;height:1px;background:#8a8a8a;"></div>
<div class="a" style="left:747px;top:690px;width:39px;height:14px;background:#d6d6d6;border:1px solid #8a8a8a;border-top:none"></div>
<svg class="a" style="left:750px;top:692px" width="10" height="10" viewBox="0 0 10 10"><rect x=".5" y=".5" width="8.500" height="8.500" fill="#f4f6fb" stroke="#6a8ac8" stroke-width=".8"/><rect x="1.500" y="5" width="3" height="3" fill="#e8a83a"/><rect x="5.500" y="5" width="3" height="3" fill="#4a7ad8"/></svg>
<div class="a t" style="left:761px;top:691.60px;font-size:7.6px;color:#1e1e1e;">Locals</div>
<svg class="a" style="left:790px;top:692px" width="10" height="9" viewBox="0 0 10 9"><rect x=".5" y=".5" width="9" height="8" fill="#f4f4f4" stroke="#c04a4a" stroke-width=".9"/><path d="M2 5l2-2 2 2 2-1.500" fill="none" stroke="#2a8a2a" stroke-width="1"/></svg>
<div class="a t" style="left:801px;top:691.60px;font-size:7.6px;color:#1e1e1e;">Watches</div>
<svg class="a" style="left:838px;top:692px" width="9" height="9" viewBox="0 0 9 9"><path d="M1.500 8V1M4.500 8V3M7.500 8V2" stroke="#5a9ae0" stroke-width="1.600"/><path d="M0 8.500h9" stroke="#5a9ae0" stroke-width=".8"/></svg>
<div class="a t" style="left:850px;top:691.60px;font-size:7.6px;color:#1e1e1e;">Memory Viewer</div>
<div class="a" style="left:0px;top:705px;width:1280px;height:16px;background:#555;"></div>
<div class="a t" style="left:1px;top:707.90px;font-size:7.4px;color:#e6e6e6;">Class Diagram:Class Overview:&nbsp;&nbsp; created: 9/05/2016&nbsp; modified: 10/06/2016 5:17:07 AM&nbsp;&nbsp; 88%&nbsp;&nbsp; 827 x 1169</div>
<div class="a t" style="left:1070px;top:707.60px;font-size:7.5px;color:#c8c8c8;transform:translateX(-50%);">–</div>
<div class="a" style="left:1080px;top:713px;width:58px;height:1px;background:#c8c8c8;"></div>
<div class="a" style="left:1090px;top:708.5px;width:2px;height:9px;background:#e8e8e8;"></div>
<div class="a t" style="left:1148px;top:707.60px;font-size:7.5px;color:#c8c8c8;transform:translateX(-50%);">+</div>
<div class="a t" style="left:1167px;top:707.90px;font-size:7.2px;color:#9a9a9a;transform:translateX(-50%);">CAP</div>
<div class="a t" style="left:1195px;top:707.90px;font-size:7.2px;color:#fff;font-weight:bold;transform:translateX(-50%);">NUM</div>
<div class="a t" style="left:1225px;top:707.90px;font-size:7.2px;color:#9a9a9a;transform:translateX(-50%);">SCRL</div>
<div class="a t" style="left:1259.5px;top:707.90px;font-size:7.2px;color:#9a9a9a;transform:translateX(-50%);">CLOUD</div>
</div>
</body></html>
